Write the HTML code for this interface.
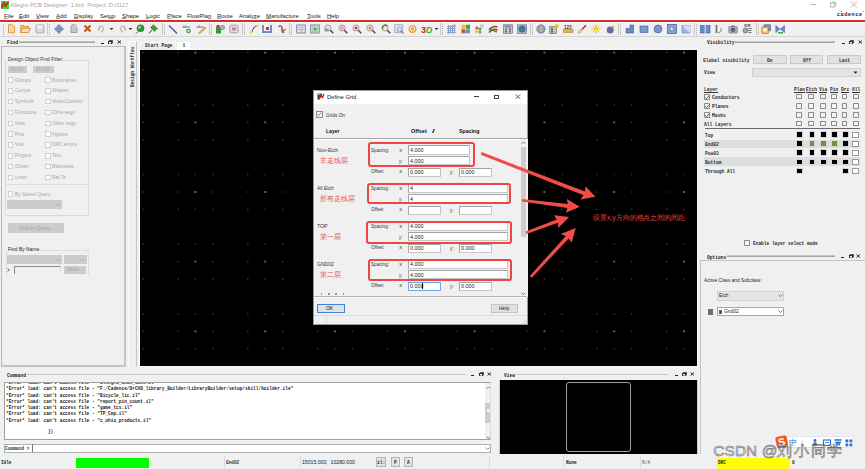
<!DOCTYPE html>
<html><head><meta charset="utf-8">
<style>
*{margin:0;padding:0;box-sizing:border-box}
html,body{width:865px;height:469px;overflow:hidden;background:#f0f0f0;font-family:"Liberation Sans",sans-serif;color:#000;position:relative}
.a{position:absolute}
.t{position:absolute;white-space:nowrap;line-height:1}
.mono{font-family:"Liberation Mono",monospace}
.serif{font-family:"Liberation Serif",serif}
u{text-decoration:underline;text-decoration-color:#9a9a9a;text-decoration-thickness:0.4px;text-underline-offset:0.3px}
</style></head><body>
<div class="a" style="left:0px;top:0px;width:865px;height:20px;background:#fff"></div>
<div class="a" style="left:0px;top:20px;width:865px;height:2px;background:#d42b2b"></div>
<svg class="a" style="left:1px;top:1px;" width="8" height="8" viewBox="0 0 8 8"><rect width="8" height="8" fill="#3fcf3f"/><path d="M0.5 6.5 L3 2 L4.5 5 L7.5 1" stroke="#d02020" stroke-width="1.8" fill="none"/></svg>
<div class="t" style="left:10px;top:2.44px;font-size:6.1px;transform:scaleX(0.965);transform-origin:0 0;color:#a4a4a4">Allegro PCB Designer: 1.brd&nbsp; Project: D:/1117</div>
<div class="t" style="left:3.6px;top:12.64px;font-size:6.1px;transform:scaleX(0.965);transform-origin:0 0;color:#1a1a1a"><u>F</u>ile</div>
<div class="t" style="left:19.4px;top:12.64px;font-size:6.1px;transform:scaleX(0.965);transform-origin:0 0;color:#1a1a1a"><u>E</u>dit</div>
<div class="t" style="left:36px;top:12.64px;font-size:6.1px;transform:scaleX(0.965);transform-origin:0 0;color:#1a1a1a"><u>V</u>iew</div>
<div class="t" style="left:56px;top:12.64px;font-size:6.1px;transform:scaleX(0.965);transform-origin:0 0;color:#1a1a1a"><u>A</u>dd</div>
<div class="t" style="left:74px;top:12.64px;font-size:6.1px;transform:scaleX(0.965);transform-origin:0 0;color:#1a1a1a"><u>D</u>isplay</div>
<div class="t" style="left:100px;top:12.64px;font-size:6.1px;transform:scaleX(0.965);transform-origin:0 0;color:#1a1a1a">Set<u>u</u>p</div>
<div class="t" style="left:122px;top:12.64px;font-size:6.1px;transform:scaleX(0.965);transform-origin:0 0;color:#1a1a1a"><u>S</u>hape</div>
<div class="t" style="left:146px;top:12.64px;font-size:6.1px;transform:scaleX(0.965);transform-origin:0 0;color:#1a1a1a"><u>L</u>ogic</div>
<div class="t" style="left:167px;top:12.64px;font-size:6.1px;transform:scaleX(0.965);transform-origin:0 0;color:#1a1a1a"><u>P</u>lace</div>
<div class="t" style="left:187.3px;top:12.64px;font-size:6.1px;transform:scaleX(0.965);transform-origin:0 0;color:#1a1a1a">FlowPla<u>n</u></div>
<div class="t" style="left:217px;top:12.64px;font-size:6.1px;transform:scaleX(0.965);transform-origin:0 0;color:#1a1a1a"><u>R</u>oute</div>
<div class="t" style="left:239px;top:12.64px;font-size:6.1px;transform:scaleX(0.965);transform-origin:0 0;color:#1a1a1a">Analy<u>z</u>e</div>
<div class="t" style="left:266px;top:12.64px;font-size:6.1px;transform:scaleX(0.965);transform-origin:0 0;color:#1a1a1a"><u>M</u>anufacture</div>
<div class="t" style="left:306.5px;top:12.64px;font-size:6.1px;transform:scaleX(0.965);transform-origin:0 0;color:#1a1a1a"><u>T</u>ools</div>
<div class="t" style="left:327px;top:12.64px;font-size:6.1px;transform:scaleX(0.965);transform-origin:0 0;color:#1a1a1a"><u>H</u>elp</div>
<svg class="a" style="left:809px;top:2px;" width="8" height="5" viewBox="0 0 8 5"><path d="M1 2.5H7" stroke="#9a9a9a" stroke-width="0.7"/></svg>
<svg class="a" style="left:829px;top:1px;" width="8" height="7" viewBox="0 0 8 7"><rect x="1.5" y="2" width="4" height="4" fill="none" stroke="#9a9a9a" stroke-width="0.7"/><path d="M3 1.2H6.8V5" fill="none" stroke="#9a9a9a" stroke-width="0.7"/></svg>
<svg class="a" style="left:850px;top:1px;" width="8" height="7" viewBox="0 0 8 7"><path d="M1 0.5L7 6.5M7 0.5L1 6.5" stroke="#9a9a9a" stroke-width="0.7"/></svg>
<div class="t" style="left:836.8px;top:11.89px;font-size:5.8px;transform:scaleX(0.9);transform-origin:0 0;color:#1a1a1a;font-weight:bold;letter-spacing:0.75px">cadence</div>
<div class="a" style="left:841.1px;top:10.8px;width:1.2px;height:1.2px;background:#e03838"></div>
<svg class="a" style="left:861.8px;top:10.3px;" width="2.4" height="2.4" viewBox="0 0 2.4 2.4"><circle cx="1.2" cy="1.2" r="0.9" fill="none" stroke="#aaa" stroke-width="0.4"/></svg>
<div class="a" style="left:0px;top:22px;width:865px;height:14px;background:#f0f0f0"></div>
<div class="a" style="left:0px;top:22px;width:865px;height:1px;background:#fbfbfb"></div>
<div class="a" style="left:0px;top:35.6px;width:865px;height:1px;background:#d4d4d4"></div>
<div class="a" style="left:1px;top:46px;width:125px;height:321px;background:#f0f0f0;border:1px solid #b8b8b8;border-right:2px solid #c4c4c4;border-bottom:2px solid #c4c4c4"></div>
<div class="a" style="left:128px;top:41px;width:9px;height:326px;background:#f0f0f0;border-left:1px solid #fbfbfb;border-right:1px solid #c4c4c4;border-top:1px solid #fbfbfb"></div>
<div class="a" style="left:139px;top:49px;width:559px;height:318px;background:#fafafa"></div>
<div class="a" style="left:140px;top:50px;width:557px;height:316px;background:#000"></div>
<div class="a" style="left:700.3px;top:260.4px;width:166px;height:194px;background:#f0f0f0;border-left:1px solid #c4c4c4;border-top:1px solid #c4c4c4"></div>
<div class="a" style="left:2.5px;top:23.5px;width:1px;height:11px;background:repeating-linear-gradient(#a8a8a8 0 1px,transparent 1px 2px)"></div>
<svg class="a" style="left:7px;top:24px;" width="11" height="10" viewBox="0 0 11 10"><path d="M1.5 0.8H5.5L7.5 2.8V8.8H1.5Z" fill="#f6dc98" stroke="#d9953e" stroke-width="0.9"/></svg>
<svg class="a" style="left:19.5px;top:24px;" width="11" height="10" viewBox="0 0 11 10"><path d="M0.8 8.5V1.5H4L5 2.5H8.5V4" fill="#f3c46a" stroke="#d98a30" stroke-width="0.9"/><path d="M0.8 8.5L2.5 4.2H10.3L8.6 8.5Z" fill="#fbe3a8" stroke="#d98a30" stroke-width="0.9"/></svg>
<svg class="a" style="left:34.5px;top:24px;" width="11" height="10" viewBox="0 0 11 10"><rect x="1" y="1" width="8" height="8" rx="1" fill="#d8d8d8" stroke="#a8a8a8" stroke-width="0.9"/><rect x="2.5" y="1.5" width="5" height="3" fill="#f4f4f4"/></svg>
<div class="a" style="left:47px;top:23px;width:1px;height:12px;background:#c8c8c8"></div>
<div class="a" style="left:49px;top:23.5px;width:1px;height:11px;background:repeating-linear-gradient(#b0b0b0 0 1px,transparent 1px 2px)"></div>
<svg class="a" style="left:53.5px;top:24px;" width="11" height="10" viewBox="0 0 11 10"><path d="M5 0.5L7 2.5H5.8V4.2H7.5V3L9.5 5L7.5 7V5.8H5.8V7.5H7L5 9.5L3 7.5H4.2V5.8H2.5V7L0.5 5L2.5 3V4.2H4.2V2.5H3Z" fill="#7ba0c8" stroke="#3f6a9a" stroke-width="0.6"/></svg>
<svg class="a" style="left:68.5px;top:24px;" width="11" height="10" viewBox="0 0 11 10"><path d="M2 3.5A3 3 0 0 1 8 3.5V8.5H2Z" fill="#c8c8c8" stroke="#909090" stroke-width="0.8"/><path d="M4 2.5A2.5 2.5 0 0 1 8.5 4" fill="none" stroke="#f0f0f0" stroke-width="0.8"/></svg>
<svg class="a" style="left:82.5px;top:24px;" width="11" height="10" viewBox="0 0 11 10"><path d="M1.5 1.5L7.5 7.5M7.5 1.5L1.5 7.5" stroke="#c0501c" stroke-width="2"/></svg>
<svg class="a" style="left:97px;top:24px;" width="11" height="10" viewBox="0 0 11 10"><path d="M2 5.5Q2 1 5 2.5Q8 4 4.5 8.5" fill="none" stroke="#b4b4b4" stroke-width="1.3"/><path d="M0.5 4.5L2 7L3.5 4.5Z" fill="#b4b4b4"/></svg>
<svg class="a" style="left:108.5px;top:24px;" width="5" height="10" viewBox="0 0 5 10"><path d="M0.5 4L4.5 4L2.5 6Z" fill="#303030"/></svg>
<svg class="a" style="left:116.5px;top:24px;" width="11" height="10" viewBox="0 0 11 10"><path d="M8 5.5Q8 1 5 2.5Q2 4 5.5 8.5" fill="none" stroke="#b4b4b4" stroke-width="1.3"/><path d="M9.5 4.5L8 7L6.5 4.5Z" fill="#b4b4b4"/></svg>
<svg class="a" style="left:127.5px;top:24px;" width="5" height="10" viewBox="0 0 5 10"><path d="M0.5 4L4.5 4L2.5 6Z" fill="#303030"/></svg>
<svg class="a" style="left:134.5px;top:24px;" width="11" height="10" viewBox="0 0 11 10"><circle cx="5.5" cy="4.3" r="3.8" fill="#2e8f2e"/><circle cx="4.5" cy="3.2" r="1.6" fill="#7fd07f"/><path d="M3 7.5L1 9.5" stroke="#404040" stroke-width="0.9"/></svg>
<svg class="a" style="left:147.5px;top:24px;" width="11" height="10" viewBox="0 0 11 10"><path d="M5.5 0.8L9.5 4.8L8 5.5L6.5 7.5L2.5 3.5L4.5 2Z" fill="#3d9a3d" stroke="#2a6a2a" stroke-width="0.6"/><path d="M4 6L0.8 9.3" stroke="#303030" stroke-width="1"/></svg>
<div class="a" style="left:161.5px;top:23px;width:1px;height:12px;background:#c8c8c8"></div>
<div class="a" style="left:163.5px;top:23.5px;width:1px;height:11px;background:repeating-linear-gradient(#b0b0b0 0 1px,transparent 1px 2px)"></div>
<svg class="a" style="left:167.5px;top:24px;" width="11" height="10" viewBox="0 0 11 10"><path d="M1 1.5L9 9.5" stroke="#3e4f8c" stroke-width="1.3"/></svg>
<svg class="a" style="left:181.5px;top:24px;" width="11" height="10" viewBox="0 0 11 10"><text x="0.5" y="4" font-size="4.2" font-family="Liberation Sans" fill="#707070" font-weight="bold">abc</text><circle cx="6.5" cy="7" r="2.3" fill="#2ea02e"/><path d="M5.2 7H7.8M6.5 5.7V8.3" stroke="#fff" stroke-width="0.8"/></svg>
<svg class="a" style="left:195.5px;top:24px;" width="11" height="10" viewBox="0 0 11 10"><text x="0.5" y="4" font-size="4.2" font-family="Liberation Sans" fill="#707070" font-weight="bold">abc</text><path d="M2.5 9L9 3L10 4L3.5 9.8Z" fill="#f0b030" stroke="#b07010" stroke-width="0.5"/></svg>
<div class="a" style="left:209px;top:23px;width:1px;height:12px;background:#c8c8c8"></div>
<div class="a" style="left:211px;top:23.5px;width:1px;height:11px;background:repeating-linear-gradient(#b0b0b0 0 1px,transparent 1px 2px)"></div>
<svg class="a" style="left:214.5px;top:24px;" width="11" height="10" viewBox="0 0 11 10"><path d="M1 3H5L6 5V9.5H1Z" fill="#2f9a2f"/><rect x="5.5" y="1.5" width="4" height="4" rx="1" fill="#b0b0b0" stroke="#707070" stroke-width="0.5"/><rect x="1.5" y="1" width="3" height="2" fill="#c03030"/></svg>
<svg class="a" style="left:229px;top:24px;" width="11" height="10" viewBox="0 0 11 10"><rect x="0.8" y="1.2" width="8.4" height="7.6" rx="1.5" fill="#e8d8e0" stroke="#9a9aaa" stroke-width="0.9"/><rect x="3" y="3.5" width="4" height="3" fill="#d07a9a"/></svg>
<div class="a" style="left:241.5px;top:23px;width:1px;height:12px;background:#c8c8c8"></div>
<div class="a" style="left:243.5px;top:23.5px;width:1px;height:11px;background:repeating-linear-gradient(#b0b0b0 0 1px,transparent 1px 2px)"></div>
<svg class="a" style="left:248.5px;top:24px;" width="11" height="10" viewBox="0 0 11 10"><path d="M1.5 8.5C4 8.5 3.5 2 8.5 1.8" fill="none" stroke="#303030" stroke-width="1"/><circle cx="1.8" cy="8.3" r="1.3" fill="#f0e020"/><circle cx="8.5" cy="1.8" r="1.3" fill="#f0e020"/></svg>
<svg class="a" style="left:262px;top:24px;" width="11" height="10" viewBox="0 0 11 10"><path d="M1 1V8H9V1" fill="none" stroke="#6f8fc8" stroke-width="2"/><rect x="4" y="3" width="3" height="3" fill="#d03030"/></svg>
<svg class="a" style="left:276.5px;top:24px;" width="11" height="10" viewBox="0 0 11 10"><path d="M1.5 3L3 1.5L5 3V7L7 9" fill="none" stroke="#707070" stroke-width="1.3"/><path d="M4.8 3.5L5.5 8L8.5 5" fill="none" stroke="#d04040" stroke-width="1.2"/></svg>
<div class="a" style="left:288.5px;top:23px;width:1px;height:12px;background:#c8c8c8"></div>
<div class="a" style="left:290.5px;top:23.5px;width:1px;height:11px;background:repeating-linear-gradient(#b0b0b0 0 1px,transparent 1px 2px)"></div>
<svg class="a" style="left:296px;top:24px;" width="11" height="10" viewBox="0 0 11 10"><rect x="0.7" y="1" width="8.6" height="8" fill="#e4e8f0" stroke="#6a7fa8" stroke-width="0.9"/><path d="M2 3.5H8M2 5.5H8M4 7H7" stroke="#d86a8a" stroke-width="0.6"/></svg>
<svg class="a" style="left:310px;top:24px;" width="11" height="10" viewBox="0 0 11 10"><rect x="0.7" y="1" width="8.6" height="8" fill="#e0ece0" stroke="#6a7fa8" stroke-width="0.9"/><path d="M2 2.5L8 8M2 8L8 2.5M5 2V8.5M1.5 5H8.5" stroke="#3a9a4a" stroke-width="0.7"/></svg>
<svg class="a" style="left:323.5px;top:24px;" width="11" height="10" viewBox="0 0 11 10"><circle cx="4" cy="4" r="3.1" fill="#e8e0e0" stroke="#b8907a" stroke-width="0.9"/><rect x="0.5" y="4.5" width="4" height="3" fill="#7aa0d0"/><path d="M6.3 6.3L9.3 9.3" stroke="#3a4a8a" stroke-width="1.6"/></svg>
<svg class="a" style="left:338px;top:24px;" width="11" height="10" viewBox="0 0 11 10"><circle cx="4" cy="4" r="3.1" fill="#e8e0e0" stroke="#b8907a" stroke-width="0.9"/><circle cx="4" cy="4" r="2" fill="#d8a8b8"/><path d="M6.3 6.3L9.3 9.3" stroke="#3a4a8a" stroke-width="1.6"/></svg>
<svg class="a" style="left:352px;top:24px;" width="11" height="10" viewBox="0 0 11 10"><circle cx="4" cy="4" r="3.1" fill="#e8e0e0" stroke="#b8907a" stroke-width="0.9"/><rect x="2.8" y="2.8" width="2.4" height="2.4" fill="#d03040"/><path d="M6.3 6.3L9.3 9.3" stroke="#3a4a8a" stroke-width="1.6"/></svg>
<svg class="a" style="left:366px;top:24px;" width="11" height="10" viewBox="0 0 11 10"><circle cx="4" cy="4" r="3.1" fill="#e8e0e0" stroke="#b8907a" stroke-width="0.9"/><rect x="2.8" y="2.8" width="2.4" height="2.4" fill="#d87080"/><path d="M6.3 6.3L9.3 9.3" stroke="#3a4a8a" stroke-width="1.6"/></svg>
<svg class="a" style="left:380.5px;top:24px;" width="11" height="10" viewBox="0 0 11 10"><circle cx="4" cy="4" r="3.1" fill="#e8e0e0" stroke="#b8907a" stroke-width="0.9"/><path d="M2 5A2.5 2.5 0 0 1 6.5 2.5" fill="none" stroke="#2a9a3a" stroke-width="1.4"/><path d="M6.3 6.3L9.3 9.3" stroke="#3a4a8a" stroke-width="1.6"/></svg>
<svg class="a" style="left:393.5px;top:24px;" width="11" height="10" viewBox="0 0 11 10"><rect x="0.7" y="0.7" width="8" height="8" fill="#dde4ee" stroke="#6a7fa8" stroke-width="0.8" stroke-dasharray="1 0.6"/><circle cx="5.5" cy="5.5" r="2.3" fill="#cfe0f0" stroke="#7090b8" stroke-width="0.7"/><path d="M7 7L9.5 9.5" stroke="#b07a3a" stroke-width="1.2"/></svg>
<svg class="a" style="left:408px;top:24px;" width="11" height="10" viewBox="0 0 11 10"><circle cx="4.5" cy="5" r="4" fill="#f0a030"/><circle cx="4.5" cy="5" r="2.2" fill="none" stroke="#fff" stroke-width="0.9"/></svg>
<svg class="a" style="left:420.5px;top:24px;" width="12" height="10" viewBox="0 0 12 10"><text x="0" y="9" font-size="9" font-weight="bold" font-family="Liberation Sans" fill="#d02020">3</text><text x="5" y="9" font-size="9" font-weight="bold" font-family="Liberation Sans" fill="#40b040">D</text></svg>
<svg class="a" style="left:433.5px;top:24px;" width="5" height="10" viewBox="0 0 5 10"><path d="M0.5 4L4.5 4L2.5 6Z" fill="#303030"/></svg>
<div class="a" style="left:439.5px;top:23px;width:1px;height:12px;background:#c8c8c8"></div>
<div class="a" style="left:441.5px;top:23.5px;width:1px;height:11px;background:repeating-linear-gradient(#b0b0b0 0 1px,transparent 1px 2px)"></div>
<svg class="a" style="left:446px;top:24px;" width="11" height="10" viewBox="0 0 11 10"><path d="M1 2.5H9.5M1 4.5H9.5M1 6.5H9.5M1 8.5H9.5M2.5 1V9.5M4.5 1V9.5M6.5 1V9.5M8.5 1V9.5" stroke="#7a8fc0" stroke-width="0.8"/><circle cx="8.5" cy="1.5" r="1.3" fill="#f0a050"/></svg>
<svg class="a" style="left:460.5px;top:24px;" width="11" height="10" viewBox="0 0 11 10"><rect x="0.5" y="0.8" width="4" height="4" fill="#e8c020"/><rect x="5" y="0.8" width="4" height="4" fill="#40a040"/><rect x="0.5" y="5.3" width="4" height="4" fill="#d05030"/><rect x="5" y="5.3" width="4" height="4" fill="#6a8ad0"/></svg>
<svg class="a" style="left:474px;top:24px;" width="11" height="10" viewBox="0 0 11 10"><circle cx="3" cy="4" r="1.5" fill="#e04040"/><circle cx="6" cy="5" r="1.5" fill="#40b040"/><circle cx="2.5" cy="7.5" r="1.5" fill="#e0c020"/><circle cx="6" cy="8" r="1.5" fill="#6a8ad0"/><rect x="6" y="0.5" width="4" height="3" fill="#c8c8c8"/></svg>
<svg class="a" style="left:488px;top:24px;" width="11" height="10" viewBox="0 0 11 10"><path d="M1 6Q5 1 9.5 3M1 8.5Q5 4 9.5 6" fill="none" stroke="#d03030" stroke-width="1.5"/><path d="M1.5 4Q5 7 9 8" fill="none" stroke="#30a030" stroke-width="1.4"/></svg>
<svg class="a" style="left:502.5px;top:24px;" width="11" height="10" viewBox="0 0 11 10"><rect x="0.5" y="0.8" width="9" height="8.5" fill="#c8c8d8" stroke="#707080" stroke-width="0.7"/><rect x="1.5" y="1.5" width="7" height="2" fill="#6a8ad0"/><rect x="2" y="4.5" width="2" height="2" fill="#30b030"/><rect x="6" y="4.5" width="2" height="2" fill="#d03030"/><rect x="2" y="7" width="2" height="1.5" fill="#d03030"/><rect x="6" y="7" width="2" height="1.5" fill="#30b030"/></svg>
<svg class="a" style="left:516.5px;top:24px;" width="11" height="10" viewBox="0 0 11 10"><rect x="0.5" y="0.8" width="9" height="8.5" fill="#b8c0d0" stroke="#707080" stroke-width="0.7"/><circle cx="5" cy="5" r="3.5" fill="#3a6ab0"/><path d="M3 3.5Q5 4 4 6Q6 7 7 5" fill="none" stroke="#3aa03a" stroke-width="1.2"/></svg>
<div class="a" style="left:529.5px;top:23px;width:1px;height:12px;background:#c8c8c8"></div>
<div class="a" style="left:531.5px;top:23.5px;width:1px;height:11px;background:repeating-linear-gradient(#b0b0b0 0 1px,transparent 1px 2px)"></div>
<svg class="a" style="left:535.5px;top:24px;" width="11" height="10" viewBox="0 0 11 10"><circle cx="5" cy="5" r="4.2" fill="#8aa0d0" stroke="#5a70a8" stroke-width="0.7"/><path d="M5 3.5V7.5" stroke="#f0d020" stroke-width="1.3"/><circle cx="5" cy="2.2" r="0.7" fill="#f0d020"/></svg>
<svg class="a" style="left:549px;top:24px;" width="11" height="10" viewBox="0 0 11 10"><rect x="0.8" y="2.5" width="6.5" height="7" fill="#c0c0c0" stroke="#606060" stroke-width="0.6"/><rect x="2" y="4" width="2" height="2" fill="#30a030"/><rect x="2" y="6.5" width="2" height="2" fill="#d03030"/><circle cx="7.8" cy="2.2" r="2" fill="#f0c020"/></svg>
<svg class="a" style="left:563px;top:24px;" width="11" height="10" viewBox="0 0 11 10"><text x="1" y="4.5" font-size="4.5" font-weight="bold" font-family="Liberation Sans" fill="#404040">123</text><rect x="0.5" y="5.5" width="9.5" height="3" fill="#e8b040" stroke="#a07020" stroke-width="0.5"/></svg>
<svg class="a" style="left:577px;top:24px;" width="11" height="10" viewBox="0 0 11 10"><path d="M8.5 0.8L9.5 1.8L5.5 6L4.5 5Z" fill="#b02030"/><path d="M1 9Q1.5 5.5 4.5 5L5.5 6Q5 9 1 9Z" fill="#f0d890" stroke="#b09040" stroke-width="0.5"/></svg>
<svg class="a" style="left:591px;top:24px;" width="11" height="10" viewBox="0 0 11 10"><path d="M5 0.5V2.5M5 7.5V9.5M0.5 5H2.5M7.5 5H9.5M1.8 1.8L3.2 3.2M6.8 6.8L8.2 8.2M8.2 1.8L6.8 3.2M1.8 8.2L3.2 6.8" stroke="#e8a020" stroke-width="0.8"/><circle cx="5" cy="5" r="2.4" fill="#f8d020"/></svg>
<svg class="a" style="left:605.5px;top:24px;" width="11" height="10" viewBox="0 0 11 10"><circle cx="4.2" cy="6" r="3.5" fill="#5a70a0"/><path d="M7 1.5V4.5M5.5 3H8.5M5.8 1.8L8.2 4.2M8.2 1.8L5.8 4.2" stroke="#e8b020" stroke-width="0.7"/></svg>
<div class="a" style="left:618px;top:23px;width:1px;height:12px;background:#c8c8c8"></div>
<div class="a" style="left:620px;top:23.5px;width:1px;height:11px;background:repeating-linear-gradient(#b0b0b0 0 1px,transparent 1px 2px)"></div>
<svg class="a" style="left:624.5px;top:24px;" width="11" height="10" viewBox="0 0 11 10"><path d="M1 9H8.5V1H5V4.5H1Z" fill="#6a8ac8" stroke="#3a5aa0" stroke-width="0.6"/></svg>
<svg class="a" style="left:638.5px;top:24px;" width="11" height="10" viewBox="0 0 11 10"><rect x="1" y="2" width="8" height="6.5" fill="#7a96cc" stroke="#3a5aa0" stroke-width="0.6"/></svg>
<svg class="a" style="left:652.5px;top:24px;" width="11" height="10" viewBox="0 0 11 10"><circle cx="5" cy="5" r="4" fill="#7a96cc" stroke="#3a5aa0" stroke-width="0.6"/></svg>
<svg class="a" style="left:666.5px;top:24px;" width="11" height="10" viewBox="0 0 11 10"><rect x="0.5" y="0.5" width="9" height="9" fill="#8aa4d8" stroke="#3a5aa0" stroke-width="0.7"/><path d="M3.5 2.5L3.5 7.5L5 6L6.5 8L7 7.5L5.8 5.5L7.5 5.2Z" fill="#fff" stroke="#304070" stroke-width="0.4"/></svg>
<svg class="a" style="left:680.5px;top:24px;" width="11" height="10" viewBox="0 0 11 10"><path d="M1 1.5H9V9H1Z" fill="#a0b4dc" stroke="#6a80b0" stroke-width="0.6"/><path d="M1 1.5L9 9V1.5Z" fill="#d8e0f0"/></svg>
<div class="a" style="left:693.5px;top:23px;width:1px;height:12px;background:#c8c8c8"></div>
<div class="a" style="left:695.5px;top:23.5px;width:1px;height:11px;background:repeating-linear-gradient(#b0b0b0 0 1px,transparent 1px 2px)"></div>
<svg class="a" style="left:699.5px;top:24px;" width="11" height="10" viewBox="0 0 11 10"><rect x="0.5" y="1.5" width="9.5" height="7.5" fill="#6a8ac8" stroke="#3a5a9a" stroke-width="0.6"/><path d="M5.2 0.8V9.8" stroke="#dde" stroke-width="1.2"/></svg>
<svg class="a" style="left:714px;top:24px;" width="11" height="10" viewBox="0 0 11 10"><path d="M2.5 0.8V9" stroke="#707888" stroke-width="1.8"/><path d="M4 9Q8 8 7 4" fill="none" stroke="#8890a0" stroke-width="1.2"/></svg>
<svg class="a" style="left:728px;top:24px;" width="11" height="10" viewBox="0 0 11 10"><rect x="0.8" y="2.5" width="8.5" height="6.5" rx="1" fill="#b8b8b8" stroke="#606060" stroke-width="0.6"/><circle cx="5" cy="5.8" r="2" fill="#5a70a8" stroke="#303030" stroke-width="0.5"/><rect x="3.5" y="1.3" width="3" height="1.5" fill="#808080"/></svg>
<svg class="a" style="left:742px;top:24px;" width="11" height="10" viewBox="0 0 11 10"><text x="2" y="2.8" font-size="3" font-family="Liberation Sans" fill="#303030" font-weight="bold">XOR</text><circle cx="3.5" cy="6.5" r="2.5" fill="#a0a8b8" stroke="#404040" stroke-width="0.5"/><path d="M6.5 4.5H9.5M6.5 6.5H9.5M6.5 8.5H9.5" stroke="#303030" stroke-width="0.7"/></svg>
<div class="a" style="left:755.5px;top:23px;width:1px;height:12px;background:#c8c8c8"></div>
<div class="a" style="left:757.5px;top:23.5px;width:1px;height:11px;background:repeating-linear-gradient(#b0b0b0 0 1px,transparent 1px 2px)"></div>
<svg class="a" style="left:760.5px;top:24px;" width="11" height="10" viewBox="0 0 11 10"><rect x="3" y="0.8" width="6.5" height="6" fill="#7a9ad0" stroke="#3a5a9a" stroke-width="0.6"/><rect x="0.8" y="3" width="6.5" height="6.5" fill="#f0c050" stroke="#a07020" stroke-width="0.6"/><rect x="2.5" y="4.5" width="3" height="3" fill="#fff"/></svg>
<svg class="a" style="left:775px;top:24px;" width="11" height="10" viewBox="0 0 11 10"><path d="M0.8 1.5L5 5L0.8 8.5ZM9.5 1.5L5.3 5L9.5 8.5Z" fill="#6a8ad0" stroke="#3a5a9a" stroke-width="0.5"/><rect x="3" y="8" width="5" height="1.5" fill="#30b040"/></svg>
<div class="t" style="left:7px;top:39.61px;font-size:5.6px;transform:scaleX(0.8185);transform-origin:0 0;font-family:'Liberation Mono',monospace;color:#1a1a1a;font-weight:bold">Find</div>
<div class="a" style="left:19px;top:41.4px;width:76.2px;height:1.6px;background:#a4a4a4;border-top:0.5px solid #c4c4c4"></div>
<div class="a" style="left:100.9px;top:43.1px;width:3.2px;height:1px;background:#202020"></div>
<svg class="a" style="left:108.4px;top:39.9px;" width="5" height="4.5" viewBox="0 0 5 4.5"><rect x="0.5" y="1.5" width="3" height="2.6" fill="none" stroke="#202020" stroke-width="0.9"/><path d="M1.5 1.3V0.5H4.5V3H4" fill="none" stroke="#202020" stroke-width="0.8"/></svg>
<svg class="a" style="left:116.9px;top:40.1px;" width="4.5" height="4" viewBox="0 0 4.5 4"><path d="M0.5 0.5L4 3.5M4 0.5L0.5 3.5" stroke="#202020" stroke-width="0.9"/></svg>
<div class="a" style="left:4.6px;top:59.5px;width:84px;height:156.5px;border:1px solid #dadada;border-radius:1px"></div>
<div class="a" style="left:7px;top:58px;width:55px;height:4px;background:#f0f0f0"></div>
<div class="t" style="left:7.9px;top:57.36px;font-size:5.6px;transform:scaleX(0.88);transform-origin:0 0;color:#333">Design Object Find Filter</div>
<div class="a" style="left:7.7px;top:66.3px;width:19.2px;height:7.1px;background:#cccccc;color:#a4a4a4"></div>
<div class="t" style="left:10px;top:66.66px;font-size:5.6px;transform:scaleX(0.87);transform-origin:0 0;color:#a4a4a4">All On</div>
<div class="a" style="left:33px;top:66.3px;width:20.8px;height:7.1px;background:#cccccc;color:#a4a4a4"></div>
<div class="t" style="left:35.8px;top:66.66px;font-size:5.6px;transform:scaleX(0.87);transform-origin:0 0;color:#a4a4a4">All Off</div>
<div class="a" style="left:7.5px;top:77.3px;width:5.5px;height:5.5px;background:#fff;border:0.8px solid #cfcfcf"></div>
<div class="a" style="left:45.3px;top:77.3px;width:5.5px;height:5.5px;background:#fff;border:0.8px solid #cfcfcf"></div>
<div class="t" style="left:14.8px;top:77.56px;font-size:5.6px;transform:scaleX(0.87);transform-origin:0 0;color:#a8a8a8">Groups</div>
<div class="t" style="left:52.2px;top:77.56px;font-size:5.6px;transform:scaleX(0.87);transform-origin:0 0;color:#a8a8a8">Bond wires</div>
<div class="a" style="left:7.5px;top:88.12px;width:5.5px;height:5.5px;background:#fff;border:0.8px solid #cfcfcf"></div>
<div class="a" style="left:45.3px;top:88.12px;width:5.5px;height:5.5px;background:#fff;border:0.8px solid #cfcfcf"></div>
<div class="t" style="left:14.8px;top:88.38px;font-size:5.6px;transform:scaleX(0.87);transform-origin:0 0;color:#a8a8a8">Comps</div>
<div class="t" style="left:52.2px;top:88.38px;font-size:5.6px;transform:scaleX(0.87);transform-origin:0 0;color:#a8a8a8">Shapes</div>
<div class="a" style="left:7.5px;top:98.94px;width:5.5px;height:5.5px;background:#fff;border:0.8px solid #cfcfcf"></div>
<div class="a" style="left:45.3px;top:98.94px;width:5.5px;height:5.5px;background:#fff;border:0.8px solid #cfcfcf"></div>
<div class="t" style="left:14.8px;top:99.20px;font-size:5.6px;transform:scaleX(0.87);transform-origin:0 0;color:#a8a8a8">Symbols</div>
<div class="t" style="left:52.2px;top:99.20px;font-size:5.6px;transform:scaleX(0.87);transform-origin:0 0;color:#a8a8a8">Voids/Cavities</div>
<div class="a" style="left:7.5px;top:109.75999999999999px;width:5.5px;height:5.5px;background:#fff;border:0.8px solid #cfcfcf"></div>
<div class="a" style="left:45.3px;top:109.75999999999999px;width:5.5px;height:5.5px;background:#fff;border:0.8px solid #cfcfcf"></div>
<div class="t" style="left:14.8px;top:110.02px;font-size:5.6px;transform:scaleX(0.87);transform-origin:0 0;color:#a8a8a8">Functions</div>
<div class="t" style="left:52.2px;top:110.02px;font-size:5.6px;transform:scaleX(0.87);transform-origin:0 0;color:#a8a8a8">Cline segs</div>
<div class="a" style="left:7.5px;top:120.58px;width:5.5px;height:5.5px;background:#fff;border:0.8px solid #cfcfcf"></div>
<div class="a" style="left:45.3px;top:120.58px;width:5.5px;height:5.5px;background:#fff;border:0.8px solid #cfcfcf"></div>
<div class="t" style="left:14.8px;top:120.84px;font-size:5.6px;transform:scaleX(0.87);transform-origin:0 0;color:#a8a8a8">Nets</div>
<div class="t" style="left:52.2px;top:120.84px;font-size:5.6px;transform:scaleX(0.87);transform-origin:0 0;color:#a8a8a8">Other segs</div>
<div class="a" style="left:7.5px;top:131.4px;width:5.5px;height:5.5px;background:#fff;border:0.8px solid #cfcfcf"></div>
<div class="a" style="left:45.3px;top:131.4px;width:5.5px;height:5.5px;background:#fff;border:0.8px solid #cfcfcf"></div>
<div class="t" style="left:14.8px;top:131.66px;font-size:5.6px;transform:scaleX(0.87);transform-origin:0 0;color:#a8a8a8">Pins</div>
<div class="t" style="left:52.2px;top:131.66px;font-size:5.6px;transform:scaleX(0.87);transform-origin:0 0;color:#a8a8a8">Figures</div>
<div class="a" style="left:7.5px;top:142.22px;width:5.5px;height:5.5px;background:#fff;border:0.8px solid #cfcfcf"></div>
<div class="a" style="left:45.3px;top:142.22px;width:5.5px;height:5.5px;background:#fff;border:0.8px solid #cfcfcf"></div>
<div class="t" style="left:14.8px;top:142.48px;font-size:5.6px;transform:scaleX(0.87);transform-origin:0 0;color:#a8a8a8">Vias</div>
<div class="t" style="left:52.2px;top:142.48px;font-size:5.6px;transform:scaleX(0.87);transform-origin:0 0;color:#a8a8a8">DRC errors</div>
<div class="a" style="left:7.5px;top:153.04000000000002px;width:5.5px;height:5.5px;background:#fff;border:0.8px solid #cfcfcf"></div>
<div class="a" style="left:45.3px;top:153.04000000000002px;width:5.5px;height:5.5px;background:#fff;border:0.8px solid #cfcfcf"></div>
<div class="t" style="left:14.8px;top:153.30px;font-size:5.6px;transform:scaleX(0.87);transform-origin:0 0;color:#a8a8a8">Fingers</div>
<div class="t" style="left:52.2px;top:153.30px;font-size:5.6px;transform:scaleX(0.87);transform-origin:0 0;color:#a8a8a8">Text</div>
<div class="a" style="left:7.5px;top:163.86px;width:5.5px;height:5.5px;background:#fff;border:0.8px solid #cfcfcf"></div>
<div class="a" style="left:45.3px;top:163.86px;width:5.5px;height:5.5px;background:#fff;border:0.8px solid #cfcfcf"></div>
<div class="t" style="left:14.8px;top:164.12px;font-size:5.6px;transform:scaleX(0.87);transform-origin:0 0;color:#a8a8a8">Clines</div>
<div class="t" style="left:52.2px;top:164.12px;font-size:5.6px;transform:scaleX(0.87);transform-origin:0 0;color:#a8a8a8">Ratsnests</div>
<div class="a" style="left:7.5px;top:174.68px;width:5.5px;height:5.5px;background:#fff;border:0.8px solid #cfcfcf"></div>
<div class="a" style="left:45.3px;top:174.68px;width:5.5px;height:5.5px;background:#fff;border:0.8px solid #cfcfcf"></div>
<div class="t" style="left:14.8px;top:174.94px;font-size:5.6px;transform:scaleX(0.87);transform-origin:0 0;color:#a8a8a8">Lines</div>
<div class="t" style="left:52.2px;top:174.94px;font-size:5.6px;transform:scaleX(0.87);transform-origin:0 0;color:#a8a8a8">Rat Ts</div>
<div class="a" style="left:5.5px;top:184.2px;width:83px;height:1px;background:#dcdcdc"></div>
<div class="a" style="left:7.5px;top:191.3px;width:5.5px;height:5.5px;background:#fff;border:0.8px solid #cfcfcf"></div>
<div class="t" style="left:14.8px;top:191.56px;font-size:5.6px;transform:scaleX(0.87);transform-origin:0 0;color:#a8a8a8">By Saved Query</div>
<div class="a" style="left:7px;top:200.4px;width:55px;height:8.9px;background:#cccccc"></div>
<svg class="a" style="left:55px;top:203px;" width="5" height="4" viewBox="0 0 5 4"><path d="M0.5 1L2.5 3L4.5 1" fill="none" stroke="#a0a0a0" stroke-width="0.7"/></svg>
<div class="a" style="left:8px;top:223.4px;width:55.6px;height:9.6px;background:#cccccc;color:#a4a4a4"></div>
<div class="t" style="left:18.5px;top:226.26px;font-size:5.6px;transform:scaleX(0.87);transform-origin:0 0;color:#a4a4a4">Find by Query...</div>
<div class="a" style="left:5.5px;top:249.5px;width:83px;height:26px;border:1px solid #e0e0e0;border-bottom:none"></div>
<div class="a" style="left:7px;top:247px;width:32px;height:4px;background:#f0f0f0"></div>
<div class="t" style="left:8px;top:246.76px;font-size:5.6px;transform:scaleX(0.88);transform-origin:0 0;color:#222">Find By Name</div>
<div class="a" style="left:7px;top:254.7px;width:55px;height:9px;background:#cccccc"></div>
<svg class="a" style="left:55.5px;top:257.5px;" width="5" height="4" viewBox="0 0 5 4"><path d="M0.5 1L2.5 3L4.5 1" fill="none" stroke="#a0a0a0" stroke-width="0.7"/></svg>
<div class="a" style="left:64px;top:254.7px;width:23px;height:9px;background:#cccccc"></div>
<svg class="a" style="left:80px;top:257.5px;" width="5" height="4" viewBox="0 0 5 4"><path d="M0.5 1L2.5 3L4.5 1" fill="none" stroke="#a0a0a0" stroke-width="0.7"/></svg>
<svg class="a" style="left:6.5px;top:267.5px;" width="3" height="4" viewBox="0 0 3 4"><path d="M0.5 0.5L2.3 2L0.5 3.5" fill="none" stroke="#404040" stroke-width="0.7"/></svg>
<div class="a" style="left:14.2px;top:266px;width:47px;height:8px;background:#f0f0f0;border-top:1px solid #8a8a8a;border-left:1px solid #8a8a8a;border-right:1px solid #e0e0e0"></div>
<div class="a" style="left:64px;top:266.3px;width:22px;height:7.5px;background:#cccccc;color:#a4a4a4"></div>
<div class="t" style="left:67px;top:267.06px;font-size:5.6px;transform:scaleX(0.87);transform-origin:0 0;color:#a4a4a4">More...</div>
<div class="t mono" style="left:132.5px;top:66.6px;font-size:4.8px;font-weight:bold;color:#333;transform:translate(-50%,-50%) rotate(-90deg) scaleX(0.93)">Design Workflow</div>
<div class="a" style="left:140.3px;top:42.4px;width:36.2px;height:8px;background:#ececec;border:1px solid #fafafa;border-bottom:none"></div>
<div class="t mono" style="left:144.8px;top:44.2px;font-size:4.8px;font-weight:bold;color:#2a2a2a;transform:scaleX(0.95);transform-origin:0 0">Start Page</div>
<div class="a" style="left:176.7px;top:41.6px;width:13.6px;height:8.5px;background:#fff"></div>
<div class="t mono" style="left:182.6px;top:44.2px;font-size:4.8px;font-weight:bold;color:#444">1</div>
<svg class="a" style="left:140px;top:50px;" width="557" height="316" viewBox="0 0 557 316"><rect x="2.4" y="1.9" width="1.4" height="1.4" fill="#3a3a3a"/><rect x="37.3" y="1.9" width="1.4" height="1.4" fill="#3a3a3a"/><rect x="54.4" y="1.6" width="2" height="2" fill="#5c5c5c"/><rect x="72.2" y="1.9" width="1.4" height="1.4" fill="#3a3a3a"/><rect x="107.1" y="1.9" width="1.4" height="1.4" fill="#3a3a3a"/><rect x="124.2" y="1.6" width="2" height="2" fill="#5c5c5c"/><rect x="142.0" y="1.9" width="1.4" height="1.4" fill="#3a3a3a"/><rect x="176.9" y="1.9" width="1.4" height="1.4" fill="#3a3a3a"/><rect x="194.0" y="1.6" width="2" height="2" fill="#5c5c5c"/><rect x="211.8" y="1.9" width="1.4" height="1.4" fill="#3a3a3a"/><rect x="246.7" y="1.9" width="1.4" height="1.4" fill="#3a3a3a"/><rect x="263.9" y="1.6" width="2" height="2" fill="#5c5c5c"/><rect x="281.6" y="1.9" width="1.4" height="1.4" fill="#3a3a3a"/><rect x="316.5" y="1.9" width="1.4" height="1.4" fill="#3a3a3a"/><rect x="333.6" y="1.6" width="2" height="2" fill="#5c5c5c"/><rect x="351.4" y="1.9" width="1.4" height="1.4" fill="#3a3a3a"/><rect x="386.3" y="1.9" width="1.4" height="1.4" fill="#3a3a3a"/><rect x="403.4" y="1.6" width="2" height="2" fill="#5c5c5c"/><rect x="421.2" y="1.9" width="1.4" height="1.4" fill="#3a3a3a"/><rect x="456.1" y="1.9" width="1.4" height="1.4" fill="#3a3a3a"/><rect x="473.2" y="1.6" width="2" height="2" fill="#5c5c5c"/><rect x="491.0" y="1.9" width="1.4" height="1.4" fill="#3a3a3a"/><rect x="525.9" y="1.9" width="1.4" height="1.4" fill="#3a3a3a"/><rect x="543.0" y="1.6" width="2" height="2" fill="#5c5c5c"/><rect x="2.4" y="19.3" width="1.4" height="1.4" fill="#3a3a3a"/><rect x="37.3" y="19.3" width="1.4" height="1.4" fill="#3a3a3a"/><rect x="54.7" y="19.3" width="1.4" height="1.4" fill="#3a3a3a"/><rect x="72.2" y="19.3" width="1.4" height="1.4" fill="#3a3a3a"/><rect x="107.1" y="19.3" width="1.4" height="1.4" fill="#3a3a3a"/><rect x="124.5" y="19.3" width="1.4" height="1.4" fill="#3a3a3a"/><rect x="142.0" y="19.3" width="1.4" height="1.4" fill="#3a3a3a"/><rect x="176.9" y="19.3" width="1.4" height="1.4" fill="#3a3a3a"/><rect x="194.3" y="19.3" width="1.4" height="1.4" fill="#3a3a3a"/><rect x="211.8" y="19.3" width="1.4" height="1.4" fill="#3a3a3a"/><rect x="246.7" y="19.3" width="1.4" height="1.4" fill="#3a3a3a"/><rect x="264.2" y="19.3" width="1.4" height="1.4" fill="#3a3a3a"/><rect x="281.6" y="19.3" width="1.4" height="1.4" fill="#3a3a3a"/><rect x="316.5" y="19.3" width="1.4" height="1.4" fill="#3a3a3a"/><rect x="333.9" y="19.3" width="1.4" height="1.4" fill="#3a3a3a"/><rect x="351.4" y="19.3" width="1.4" height="1.4" fill="#3a3a3a"/><rect x="386.3" y="19.3" width="1.4" height="1.4" fill="#3a3a3a"/><rect x="403.7" y="19.3" width="1.4" height="1.4" fill="#3a3a3a"/><rect x="421.2" y="19.3" width="1.4" height="1.4" fill="#3a3a3a"/><rect x="456.1" y="19.3" width="1.4" height="1.4" fill="#3a3a3a"/><rect x="473.6" y="19.3" width="1.4" height="1.4" fill="#3a3a3a"/><rect x="491.0" y="19.3" width="1.4" height="1.4" fill="#3a3a3a"/><rect x="525.9" y="19.3" width="1.4" height="1.4" fill="#3a3a3a"/><rect x="543.3" y="19.3" width="1.4" height="1.4" fill="#3a3a3a"/><rect x="2.4" y="54.2" width="1.4" height="1.4" fill="#3a3a3a"/><rect x="37.3" y="54.2" width="1.4" height="1.4" fill="#3a3a3a"/><rect x="54.7" y="54.2" width="1.4" height="1.4" fill="#3a3a3a"/><rect x="72.2" y="54.2" width="1.4" height="1.4" fill="#3a3a3a"/><rect x="107.1" y="54.2" width="1.4" height="1.4" fill="#3a3a3a"/><rect x="124.5" y="54.2" width="1.4" height="1.4" fill="#3a3a3a"/><rect x="142.0" y="54.2" width="1.4" height="1.4" fill="#3a3a3a"/><rect x="176.9" y="54.2" width="1.4" height="1.4" fill="#3a3a3a"/><rect x="194.3" y="54.2" width="1.4" height="1.4" fill="#3a3a3a"/><rect x="211.8" y="54.2" width="1.4" height="1.4" fill="#3a3a3a"/><rect x="246.7" y="54.2" width="1.4" height="1.4" fill="#3a3a3a"/><rect x="264.2" y="54.2" width="1.4" height="1.4" fill="#3a3a3a"/><rect x="281.6" y="54.2" width="1.4" height="1.4" fill="#3a3a3a"/><rect x="316.5" y="54.2" width="1.4" height="1.4" fill="#3a3a3a"/><rect x="333.9" y="54.2" width="1.4" height="1.4" fill="#3a3a3a"/><rect x="351.4" y="54.2" width="1.4" height="1.4" fill="#3a3a3a"/><rect x="386.3" y="54.2" width="1.4" height="1.4" fill="#3a3a3a"/><rect x="403.7" y="54.2" width="1.4" height="1.4" fill="#3a3a3a"/><rect x="421.2" y="54.2" width="1.4" height="1.4" fill="#3a3a3a"/><rect x="456.1" y="54.2" width="1.4" height="1.4" fill="#3a3a3a"/><rect x="473.6" y="54.2" width="1.4" height="1.4" fill="#3a3a3a"/><rect x="491.0" y="54.2" width="1.4" height="1.4" fill="#3a3a3a"/><rect x="525.9" y="54.2" width="1.4" height="1.4" fill="#3a3a3a"/><rect x="543.3" y="54.2" width="1.4" height="1.4" fill="#3a3a3a"/><rect x="2.4" y="71.6" width="1.4" height="1.4" fill="#3a3a3a"/><rect x="37.3" y="71.6" width="1.4" height="1.4" fill="#3a3a3a"/><rect x="54.4" y="71.3" width="2" height="2" fill="#5c5c5c"/><rect x="72.2" y="71.6" width="1.4" height="1.4" fill="#3a3a3a"/><rect x="107.1" y="71.6" width="1.4" height="1.4" fill="#3a3a3a"/><rect x="124.2" y="71.3" width="2" height="2" fill="#5c5c5c"/><rect x="142.0" y="71.6" width="1.4" height="1.4" fill="#3a3a3a"/><rect x="176.9" y="71.6" width="1.4" height="1.4" fill="#3a3a3a"/><rect x="194.0" y="71.3" width="2" height="2" fill="#5c5c5c"/><rect x="211.8" y="71.6" width="1.4" height="1.4" fill="#3a3a3a"/><rect x="246.7" y="71.6" width="1.4" height="1.4" fill="#3a3a3a"/><rect x="263.9" y="71.3" width="2" height="2" fill="#5c5c5c"/><rect x="281.6" y="71.6" width="1.4" height="1.4" fill="#3a3a3a"/><rect x="316.5" y="71.6" width="1.4" height="1.4" fill="#3a3a3a"/><rect x="333.6" y="71.3" width="2" height="2" fill="#5c5c5c"/><rect x="351.4" y="71.6" width="1.4" height="1.4" fill="#3a3a3a"/><rect x="386.3" y="71.6" width="1.4" height="1.4" fill="#3a3a3a"/><rect x="403.4" y="71.3" width="2" height="2" fill="#5c5c5c"/><rect x="421.2" y="71.6" width="1.4" height="1.4" fill="#3a3a3a"/><rect x="456.1" y="71.6" width="1.4" height="1.4" fill="#3a3a3a"/><rect x="473.2" y="71.3" width="2" height="2" fill="#5c5c5c"/><rect x="491.0" y="71.6" width="1.4" height="1.4" fill="#3a3a3a"/><rect x="525.9" y="71.6" width="1.4" height="1.4" fill="#3a3a3a"/><rect x="543.0" y="71.3" width="2" height="2" fill="#5c5c5c"/><rect x="2.4" y="89.0" width="1.4" height="1.4" fill="#3a3a3a"/><rect x="37.3" y="89.0" width="1.4" height="1.4" fill="#3a3a3a"/><rect x="54.7" y="89.0" width="1.4" height="1.4" fill="#3a3a3a"/><rect x="72.2" y="89.0" width="1.4" height="1.4" fill="#3a3a3a"/><rect x="107.1" y="89.0" width="1.4" height="1.4" fill="#3a3a3a"/><rect x="124.5" y="89.0" width="1.4" height="1.4" fill="#3a3a3a"/><rect x="142.0" y="89.0" width="1.4" height="1.4" fill="#3a3a3a"/><rect x="176.9" y="89.0" width="1.4" height="1.4" fill="#3a3a3a"/><rect x="194.3" y="89.0" width="1.4" height="1.4" fill="#3a3a3a"/><rect x="211.8" y="89.0" width="1.4" height="1.4" fill="#3a3a3a"/><rect x="246.7" y="89.0" width="1.4" height="1.4" fill="#3a3a3a"/><rect x="264.2" y="89.0" width="1.4" height="1.4" fill="#3a3a3a"/><rect x="281.6" y="89.0" width="1.4" height="1.4" fill="#3a3a3a"/><rect x="316.5" y="89.0" width="1.4" height="1.4" fill="#3a3a3a"/><rect x="333.9" y="89.0" width="1.4" height="1.4" fill="#3a3a3a"/><rect x="351.4" y="89.0" width="1.4" height="1.4" fill="#3a3a3a"/><rect x="386.3" y="89.0" width="1.4" height="1.4" fill="#3a3a3a"/><rect x="403.7" y="89.0" width="1.4" height="1.4" fill="#3a3a3a"/><rect x="421.2" y="89.0" width="1.4" height="1.4" fill="#3a3a3a"/><rect x="456.1" y="89.0" width="1.4" height="1.4" fill="#3a3a3a"/><rect x="473.6" y="89.0" width="1.4" height="1.4" fill="#3a3a3a"/><rect x="491.0" y="89.0" width="1.4" height="1.4" fill="#3a3a3a"/><rect x="525.9" y="89.0" width="1.4" height="1.4" fill="#3a3a3a"/><rect x="543.3" y="89.0" width="1.4" height="1.4" fill="#3a3a3a"/><rect x="2.4" y="123.8" width="1.4" height="1.4" fill="#3a3a3a"/><rect x="37.3" y="123.8" width="1.4" height="1.4" fill="#3a3a3a"/><rect x="54.7" y="123.8" width="1.4" height="1.4" fill="#3a3a3a"/><rect x="72.2" y="123.8" width="1.4" height="1.4" fill="#3a3a3a"/><rect x="107.1" y="123.8" width="1.4" height="1.4" fill="#3a3a3a"/><rect x="124.5" y="123.8" width="1.4" height="1.4" fill="#3a3a3a"/><rect x="142.0" y="123.8" width="1.4" height="1.4" fill="#3a3a3a"/><rect x="176.9" y="123.8" width="1.4" height="1.4" fill="#3a3a3a"/><rect x="194.3" y="123.8" width="1.4" height="1.4" fill="#3a3a3a"/><rect x="211.8" y="123.8" width="1.4" height="1.4" fill="#3a3a3a"/><rect x="246.7" y="123.8" width="1.4" height="1.4" fill="#3a3a3a"/><rect x="264.2" y="123.8" width="1.4" height="1.4" fill="#3a3a3a"/><rect x="281.6" y="123.8" width="1.4" height="1.4" fill="#3a3a3a"/><rect x="316.5" y="123.8" width="1.4" height="1.4" fill="#3a3a3a"/><rect x="333.9" y="123.8" width="1.4" height="1.4" fill="#3a3a3a"/><rect x="351.4" y="123.8" width="1.4" height="1.4" fill="#3a3a3a"/><rect x="386.3" y="123.8" width="1.4" height="1.4" fill="#3a3a3a"/><rect x="403.7" y="123.8" width="1.4" height="1.4" fill="#3a3a3a"/><rect x="421.2" y="123.8" width="1.4" height="1.4" fill="#3a3a3a"/><rect x="456.1" y="123.8" width="1.4" height="1.4" fill="#3a3a3a"/><rect x="473.6" y="123.8" width="1.4" height="1.4" fill="#3a3a3a"/><rect x="491.0" y="123.8" width="1.4" height="1.4" fill="#3a3a3a"/><rect x="525.9" y="123.8" width="1.4" height="1.4" fill="#3a3a3a"/><rect x="543.3" y="123.8" width="1.4" height="1.4" fill="#3a3a3a"/><rect x="2.4" y="141.3" width="1.4" height="1.4" fill="#3a3a3a"/><rect x="37.3" y="141.3" width="1.4" height="1.4" fill="#3a3a3a"/><rect x="54.4" y="141.0" width="2" height="2" fill="#5c5c5c"/><rect x="72.2" y="141.3" width="1.4" height="1.4" fill="#3a3a3a"/><rect x="107.1" y="141.3" width="1.4" height="1.4" fill="#3a3a3a"/><rect x="124.2" y="141.0" width="2" height="2" fill="#5c5c5c"/><rect x="142.0" y="141.3" width="1.4" height="1.4" fill="#3a3a3a"/><rect x="176.9" y="141.3" width="1.4" height="1.4" fill="#3a3a3a"/><rect x="194.0" y="141.0" width="2" height="2" fill="#5c5c5c"/><rect x="211.8" y="141.3" width="1.4" height="1.4" fill="#3a3a3a"/><rect x="246.7" y="141.3" width="1.4" height="1.4" fill="#3a3a3a"/><rect x="263.9" y="141.0" width="2" height="2" fill="#5c5c5c"/><rect x="281.6" y="141.3" width="1.4" height="1.4" fill="#3a3a3a"/><rect x="316.5" y="141.3" width="1.4" height="1.4" fill="#3a3a3a"/><rect x="333.6" y="141.0" width="2" height="2" fill="#5c5c5c"/><rect x="351.4" y="141.3" width="1.4" height="1.4" fill="#3a3a3a"/><rect x="386.3" y="141.3" width="1.4" height="1.4" fill="#3a3a3a"/><rect x="403.4" y="141.0" width="2" height="2" fill="#5c5c5c"/><rect x="421.2" y="141.3" width="1.4" height="1.4" fill="#3a3a3a"/><rect x="456.1" y="141.3" width="1.4" height="1.4" fill="#3a3a3a"/><rect x="473.2" y="141.0" width="2" height="2" fill="#5c5c5c"/><rect x="491.0" y="141.3" width="1.4" height="1.4" fill="#3a3a3a"/><rect x="525.9" y="141.3" width="1.4" height="1.4" fill="#3a3a3a"/><rect x="543.0" y="141.0" width="2" height="2" fill="#5c5c5c"/><rect x="2.4" y="158.7" width="1.4" height="1.4" fill="#3a3a3a"/><rect x="37.3" y="158.7" width="1.4" height="1.4" fill="#3a3a3a"/><rect x="54.7" y="158.7" width="1.4" height="1.4" fill="#3a3a3a"/><rect x="72.2" y="158.7" width="1.4" height="1.4" fill="#3a3a3a"/><rect x="107.1" y="158.7" width="1.4" height="1.4" fill="#3a3a3a"/><rect x="124.5" y="158.7" width="1.4" height="1.4" fill="#3a3a3a"/><rect x="142.0" y="158.7" width="1.4" height="1.4" fill="#3a3a3a"/><rect x="176.9" y="158.7" width="1.4" height="1.4" fill="#3a3a3a"/><rect x="194.3" y="158.7" width="1.4" height="1.4" fill="#3a3a3a"/><rect x="211.8" y="158.7" width="1.4" height="1.4" fill="#3a3a3a"/><rect x="246.7" y="158.7" width="1.4" height="1.4" fill="#3a3a3a"/><rect x="264.2" y="158.7" width="1.4" height="1.4" fill="#3a3a3a"/><rect x="281.6" y="158.7" width="1.4" height="1.4" fill="#3a3a3a"/><rect x="316.5" y="158.7" width="1.4" height="1.4" fill="#3a3a3a"/><rect x="333.9" y="158.7" width="1.4" height="1.4" fill="#3a3a3a"/><rect x="351.4" y="158.7" width="1.4" height="1.4" fill="#3a3a3a"/><rect x="386.3" y="158.7" width="1.4" height="1.4" fill="#3a3a3a"/><rect x="403.7" y="158.7" width="1.4" height="1.4" fill="#3a3a3a"/><rect x="421.2" y="158.7" width="1.4" height="1.4" fill="#3a3a3a"/><rect x="456.1" y="158.7" width="1.4" height="1.4" fill="#3a3a3a"/><rect x="473.6" y="158.7" width="1.4" height="1.4" fill="#3a3a3a"/><rect x="491.0" y="158.7" width="1.4" height="1.4" fill="#3a3a3a"/><rect x="525.9" y="158.7" width="1.4" height="1.4" fill="#3a3a3a"/><rect x="543.3" y="158.7" width="1.4" height="1.4" fill="#3a3a3a"/><rect x="2.4" y="193.5" width="1.4" height="1.4" fill="#3a3a3a"/><rect x="37.3" y="193.5" width="1.4" height="1.4" fill="#3a3a3a"/><rect x="54.7" y="193.5" width="1.4" height="1.4" fill="#3a3a3a"/><rect x="72.2" y="193.5" width="1.4" height="1.4" fill="#3a3a3a"/><rect x="107.1" y="193.5" width="1.4" height="1.4" fill="#3a3a3a"/><rect x="124.5" y="193.5" width="1.4" height="1.4" fill="#3a3a3a"/><rect x="142.0" y="193.5" width="1.4" height="1.4" fill="#3a3a3a"/><rect x="176.9" y="193.5" width="1.4" height="1.4" fill="#3a3a3a"/><rect x="194.3" y="193.5" width="1.4" height="1.4" fill="#3a3a3a"/><rect x="211.8" y="193.5" width="1.4" height="1.4" fill="#3a3a3a"/><rect x="246.7" y="193.5" width="1.4" height="1.4" fill="#3a3a3a"/><rect x="264.2" y="193.5" width="1.4" height="1.4" fill="#3a3a3a"/><rect x="281.6" y="193.5" width="1.4" height="1.4" fill="#3a3a3a"/><rect x="316.5" y="193.5" width="1.4" height="1.4" fill="#3a3a3a"/><rect x="333.9" y="193.5" width="1.4" height="1.4" fill="#3a3a3a"/><rect x="351.4" y="193.5" width="1.4" height="1.4" fill="#3a3a3a"/><rect x="386.3" y="193.5" width="1.4" height="1.4" fill="#3a3a3a"/><rect x="403.7" y="193.5" width="1.4" height="1.4" fill="#3a3a3a"/><rect x="421.2" y="193.5" width="1.4" height="1.4" fill="#3a3a3a"/><rect x="456.1" y="193.5" width="1.4" height="1.4" fill="#3a3a3a"/><rect x="473.6" y="193.5" width="1.4" height="1.4" fill="#3a3a3a"/><rect x="491.0" y="193.5" width="1.4" height="1.4" fill="#3a3a3a"/><rect x="525.9" y="193.5" width="1.4" height="1.4" fill="#3a3a3a"/><rect x="543.3" y="193.5" width="1.4" height="1.4" fill="#3a3a3a"/><rect x="2.4" y="210.9" width="1.4" height="1.4" fill="#3a3a3a"/><rect x="37.3" y="210.9" width="1.4" height="1.4" fill="#3a3a3a"/><rect x="54.4" y="210.6" width="2" height="2" fill="#5c5c5c"/><rect x="72.2" y="210.9" width="1.4" height="1.4" fill="#3a3a3a"/><rect x="107.1" y="210.9" width="1.4" height="1.4" fill="#3a3a3a"/><rect x="124.2" y="210.6" width="2" height="2" fill="#5c5c5c"/><rect x="142.0" y="210.9" width="1.4" height="1.4" fill="#3a3a3a"/><rect x="176.9" y="210.9" width="1.4" height="1.4" fill="#3a3a3a"/><rect x="194.0" y="210.6" width="2" height="2" fill="#5c5c5c"/><rect x="211.8" y="210.9" width="1.4" height="1.4" fill="#3a3a3a"/><rect x="246.7" y="210.9" width="1.4" height="1.4" fill="#3a3a3a"/><rect x="263.9" y="210.6" width="2" height="2" fill="#5c5c5c"/><rect x="281.6" y="210.9" width="1.4" height="1.4" fill="#3a3a3a"/><rect x="316.5" y="210.9" width="1.4" height="1.4" fill="#3a3a3a"/><rect x="333.6" y="210.6" width="2" height="2" fill="#5c5c5c"/><rect x="351.4" y="210.9" width="1.4" height="1.4" fill="#3a3a3a"/><rect x="386.3" y="210.9" width="1.4" height="1.4" fill="#3a3a3a"/><rect x="403.4" y="210.6" width="2" height="2" fill="#5c5c5c"/><rect x="421.2" y="210.9" width="1.4" height="1.4" fill="#3a3a3a"/><rect x="456.1" y="210.9" width="1.4" height="1.4" fill="#3a3a3a"/><rect x="473.2" y="210.6" width="2" height="2" fill="#5c5c5c"/><rect x="491.0" y="210.9" width="1.4" height="1.4" fill="#3a3a3a"/><rect x="525.9" y="210.9" width="1.4" height="1.4" fill="#3a3a3a"/><rect x="543.0" y="210.6" width="2" height="2" fill="#5c5c5c"/><rect x="2.4" y="228.4" width="1.4" height="1.4" fill="#3a3a3a"/><rect x="37.3" y="228.4" width="1.4" height="1.4" fill="#3a3a3a"/><rect x="54.7" y="228.4" width="1.4" height="1.4" fill="#3a3a3a"/><rect x="72.2" y="228.4" width="1.4" height="1.4" fill="#3a3a3a"/><rect x="107.1" y="228.4" width="1.4" height="1.4" fill="#3a3a3a"/><rect x="124.5" y="228.4" width="1.4" height="1.4" fill="#3a3a3a"/><rect x="142.0" y="228.4" width="1.4" height="1.4" fill="#3a3a3a"/><rect x="176.9" y="228.4" width="1.4" height="1.4" fill="#3a3a3a"/><rect x="194.3" y="228.4" width="1.4" height="1.4" fill="#3a3a3a"/><rect x="211.8" y="228.4" width="1.4" height="1.4" fill="#3a3a3a"/><rect x="246.7" y="228.4" width="1.4" height="1.4" fill="#3a3a3a"/><rect x="264.2" y="228.4" width="1.4" height="1.4" fill="#3a3a3a"/><rect x="281.6" y="228.4" width="1.4" height="1.4" fill="#3a3a3a"/><rect x="316.5" y="228.4" width="1.4" height="1.4" fill="#3a3a3a"/><rect x="333.9" y="228.4" width="1.4" height="1.4" fill="#3a3a3a"/><rect x="351.4" y="228.4" width="1.4" height="1.4" fill="#3a3a3a"/><rect x="386.3" y="228.4" width="1.4" height="1.4" fill="#3a3a3a"/><rect x="403.7" y="228.4" width="1.4" height="1.4" fill="#3a3a3a"/><rect x="421.2" y="228.4" width="1.4" height="1.4" fill="#3a3a3a"/><rect x="456.1" y="228.4" width="1.4" height="1.4" fill="#3a3a3a"/><rect x="473.6" y="228.4" width="1.4" height="1.4" fill="#3a3a3a"/><rect x="491.0" y="228.4" width="1.4" height="1.4" fill="#3a3a3a"/><rect x="525.9" y="228.4" width="1.4" height="1.4" fill="#3a3a3a"/><rect x="543.3" y="228.4" width="1.4" height="1.4" fill="#3a3a3a"/><rect x="2.4" y="263.2" width="1.4" height="1.4" fill="#3a3a3a"/><rect x="37.3" y="263.2" width="1.4" height="1.4" fill="#3a3a3a"/><rect x="54.7" y="263.2" width="1.4" height="1.4" fill="#3a3a3a"/><rect x="72.2" y="263.2" width="1.4" height="1.4" fill="#3a3a3a"/><rect x="107.1" y="263.2" width="1.4" height="1.4" fill="#3a3a3a"/><rect x="124.5" y="263.2" width="1.4" height="1.4" fill="#3a3a3a"/><rect x="142.0" y="263.2" width="1.4" height="1.4" fill="#3a3a3a"/><rect x="176.9" y="263.2" width="1.4" height="1.4" fill="#3a3a3a"/><rect x="194.3" y="263.2" width="1.4" height="1.4" fill="#3a3a3a"/><rect x="211.8" y="263.2" width="1.4" height="1.4" fill="#3a3a3a"/><rect x="246.7" y="263.2" width="1.4" height="1.4" fill="#3a3a3a"/><rect x="264.2" y="263.2" width="1.4" height="1.4" fill="#3a3a3a"/><rect x="281.6" y="263.2" width="1.4" height="1.4" fill="#3a3a3a"/><rect x="316.5" y="263.2" width="1.4" height="1.4" fill="#3a3a3a"/><rect x="333.9" y="263.2" width="1.4" height="1.4" fill="#3a3a3a"/><rect x="351.4" y="263.2" width="1.4" height="1.4" fill="#3a3a3a"/><rect x="386.3" y="263.2" width="1.4" height="1.4" fill="#3a3a3a"/><rect x="403.7" y="263.2" width="1.4" height="1.4" fill="#3a3a3a"/><rect x="421.2" y="263.2" width="1.4" height="1.4" fill="#3a3a3a"/><rect x="456.1" y="263.2" width="1.4" height="1.4" fill="#3a3a3a"/><rect x="473.6" y="263.2" width="1.4" height="1.4" fill="#3a3a3a"/><rect x="491.0" y="263.2" width="1.4" height="1.4" fill="#3a3a3a"/><rect x="525.9" y="263.2" width="1.4" height="1.4" fill="#3a3a3a"/><rect x="543.3" y="263.2" width="1.4" height="1.4" fill="#3a3a3a"/><rect x="2.4" y="280.6" width="1.4" height="1.4" fill="#3a3a3a"/><rect x="37.3" y="280.6" width="1.4" height="1.4" fill="#3a3a3a"/><rect x="54.4" y="280.3" width="2" height="2" fill="#5c5c5c"/><rect x="72.2" y="280.6" width="1.4" height="1.4" fill="#3a3a3a"/><rect x="107.1" y="280.6" width="1.4" height="1.4" fill="#3a3a3a"/><rect x="124.2" y="280.3" width="2" height="2" fill="#5c5c5c"/><rect x="142.0" y="280.6" width="1.4" height="1.4" fill="#3a3a3a"/><rect x="176.9" y="280.6" width="1.4" height="1.4" fill="#3a3a3a"/><rect x="194.0" y="280.3" width="2" height="2" fill="#5c5c5c"/><rect x="211.8" y="280.6" width="1.4" height="1.4" fill="#3a3a3a"/><rect x="246.7" y="280.6" width="1.4" height="1.4" fill="#3a3a3a"/><rect x="263.9" y="280.3" width="2" height="2" fill="#5c5c5c"/><rect x="281.6" y="280.6" width="1.4" height="1.4" fill="#3a3a3a"/><rect x="316.5" y="280.6" width="1.4" height="1.4" fill="#3a3a3a"/><rect x="333.6" y="280.3" width="2" height="2" fill="#5c5c5c"/><rect x="351.4" y="280.6" width="1.4" height="1.4" fill="#3a3a3a"/><rect x="386.3" y="280.6" width="1.4" height="1.4" fill="#3a3a3a"/><rect x="403.4" y="280.3" width="2" height="2" fill="#5c5c5c"/><rect x="421.2" y="280.6" width="1.4" height="1.4" fill="#3a3a3a"/><rect x="456.1" y="280.6" width="1.4" height="1.4" fill="#3a3a3a"/><rect x="473.2" y="280.3" width="2" height="2" fill="#5c5c5c"/><rect x="491.0" y="280.6" width="1.4" height="1.4" fill="#3a3a3a"/><rect x="525.9" y="280.6" width="1.4" height="1.4" fill="#3a3a3a"/><rect x="543.0" y="280.3" width="2" height="2" fill="#5c5c5c"/><rect x="2.4" y="298.0" width="1.4" height="1.4" fill="#3a3a3a"/><rect x="37.3" y="298.0" width="1.4" height="1.4" fill="#3a3a3a"/><rect x="54.7" y="298.0" width="1.4" height="1.4" fill="#3a3a3a"/><rect x="72.2" y="298.0" width="1.4" height="1.4" fill="#3a3a3a"/><rect x="107.1" y="298.0" width="1.4" height="1.4" fill="#3a3a3a"/><rect x="124.5" y="298.0" width="1.4" height="1.4" fill="#3a3a3a"/><rect x="142.0" y="298.0" width="1.4" height="1.4" fill="#3a3a3a"/><rect x="176.9" y="298.0" width="1.4" height="1.4" fill="#3a3a3a"/><rect x="194.3" y="298.0" width="1.4" height="1.4" fill="#3a3a3a"/><rect x="211.8" y="298.0" width="1.4" height="1.4" fill="#3a3a3a"/><rect x="246.7" y="298.0" width="1.4" height="1.4" fill="#3a3a3a"/><rect x="264.2" y="298.0" width="1.4" height="1.4" fill="#3a3a3a"/><rect x="281.6" y="298.0" width="1.4" height="1.4" fill="#3a3a3a"/><rect x="316.5" y="298.0" width="1.4" height="1.4" fill="#3a3a3a"/><rect x="333.9" y="298.0" width="1.4" height="1.4" fill="#3a3a3a"/><rect x="351.4" y="298.0" width="1.4" height="1.4" fill="#3a3a3a"/><rect x="386.3" y="298.0" width="1.4" height="1.4" fill="#3a3a3a"/><rect x="403.7" y="298.0" width="1.4" height="1.4" fill="#3a3a3a"/><rect x="421.2" y="298.0" width="1.4" height="1.4" fill="#3a3a3a"/><rect x="456.1" y="298.0" width="1.4" height="1.4" fill="#3a3a3a"/><rect x="473.6" y="298.0" width="1.4" height="1.4" fill="#3a3a3a"/><rect x="491.0" y="298.0" width="1.4" height="1.4" fill="#3a3a3a"/><rect x="525.9" y="298.0" width="1.4" height="1.4" fill="#3a3a3a"/><rect x="543.3" y="298.0" width="1.4" height="1.4" fill="#3a3a3a"/></svg>
<div class="a" style="left:313px;top:90px;width:215.3px;height:234.6px;background:#f0f0f0;border:1px solid #9a9a9a"></div>
<div class="a" style="left:314px;top:91px;width:213.3px;height:12.8px;background:#fff"></div>
<svg class="a" style="left:317px;top:92.8px;" width="7.5" height="7" viewBox="0 0 7.5 7"><path d="M0.5 0.5H5V2.5L3.5 4L2 6.5H0.5Z" fill="#1e3a9a"/><path d="M1.5 6.5L4 3L5.5 4.5L7 1" fill="none" stroke="#d82020" stroke-width="1.5"/><path d="M1 1.5H3.5" stroke="#fff" stroke-width="0.6"/></svg>
<div class="t" style="left:326.6px;top:93.65px;font-size:6.2px;transform:scaleX(0.9376);transform-origin:0 0;color:#222">Define Grid</div>
<div class="a" style="left:474px;top:96.2px;width:4.9px;height:0.8px;background:#444"></div>
<div class="a" style="left:494.4px;top:94.5px;width:5px;height:4.4px;border:0.9px solid #444"></div>
<svg class="a" style="left:514.8px;top:94px;" width="6" height="5.4" viewBox="0 0 6 5.4"><path d="M0.4 0.3L5.6 5.1M5.6 0.3L0.4 5.1" stroke="#444" stroke-width="0.8"/></svg>
<div class="a" style="left:316.4px;top:111.3px;width:6.3px;height:6.3px;border:0.8px solid #8a8a8a;background:#f4f4f4"></div>
<svg class="a" style="left:316.4px;top:111.3px;" width="6.3" height="6.3" viewBox="0 0 6.3 6.3"><path d="M1.3 3.2L2.6 4.6L5.2 1.6" fill="none" stroke="#707070" stroke-width="0.8"/></svg>
<div class="t" style="left:326px;top:112.57px;font-size:5.7px;transform:scaleX(0.8331);transform-origin:0 0;color:#333">Grids On</div>
<div class="t" style="left:326.4px;top:129.16px;font-size:5.6px;transform:scaleX(0.9101);transform-origin:0 0;color:#111;font-weight:bold">Layer</div>
<div class="t" style="left:411.3px;top:129.16px;font-size:5.6px;transform:scaleX(0.9704);transform-origin:0 0;color:#111;font-weight:bold">Offset</div>
<div class="t" style="left:432.4px;top:129.16px;font-size:5.6px;transform:scaleX(1.7997);transform-origin:0 0;color:#111;font-weight:bold">/</div>
<div class="t" style="left:459.2px;top:129.16px;font-size:5.6px;transform:scaleX(0.9457);transform-origin:0 0;color:#111;font-weight:bold">Spacing</div>
<div class="a" style="left:314px;top:137.8px;width:213.3px;height:1px;background:#a4a4a4"></div>
<div class="a" style="left:314px;top:138.8px;width:213.3px;height:0.6px;background:#fcfcfc"></div>
<div class="a" style="left:519.5px;top:139px;width:8px;height:157.5px;background:#f0f0f0"></div>
<div class="a" style="left:521px;top:147px;width:5px;height:90px;background:#cdcdcd"></div>
<svg class="a" style="left:521px;top:141.3px;" width="5" height="3.5" viewBox="0 0 5 3.5"><path d="M0.6 2.8L2.5 0.9L4.4 2.8" fill="none" stroke="#606060" stroke-width="0.8"/></svg>
<svg class="a" style="left:521px;top:291.6px;" width="5" height="3.5" viewBox="0 0 5 3.5"><path d="M0.6 0.7L2.5 2.6L4.4 0.7" fill="none" stroke="#606060" stroke-width="0.8"/></svg>
<div class="t" style="left:317px;top:147.76px;font-size:5.6px;transform:scaleX(0.8996);transform-origin:0 0;color:#333">Non-Etch</div>
<div class="t" style="left:320.2px;top:157.27px;font-size:7px;color:#ee4a42">非走线层</div>
<div class="t" style="left:370.8px;top:147.76px;font-size:5.6px;transform:scaleX(0.8259);transform-origin:0 0;color:#333">Spacing:</div>
<div class="t" style="left:399.3px;top:147.56px;font-size:5.6px;color:#333">x</div>
<div class="t" style="left:399.2px;top:158.56px;font-size:5.6px;transform:scaleX(0.8);transform-origin:0 0;color:#333">y:</div>
<div class="t" style="left:370.8px;top:169.36px;font-size:5.6px;transform:scaleX(0.8113);transform-origin:0 0;color:#333">Offset:</div>
<div class="t" style="left:399.3px;top:169.26px;font-size:5.6px;color:#333">x</div>
<div class="t" style="left:449.5px;top:169.56px;font-size:5.6px;transform:scaleX(0.8);transform-origin:0 0;color:#333">y:</div>
<div class="a" style="left:408.4px;top:145px;width:61.60000000000002px;height:9.5px;background:#fff;border-top:1.2px solid #a4a4a4;border-left:1px solid #a4a4a4;border-right:1px solid #c4c4c4;border-bottom:1px solid #c8c8c8"></div>
<div class="t" style="left:409.59999999999997px;top:147.56px;font-size:5.6px;transform:scaleX(0.9633);transform-origin:0 0;color:#222">4.000</div>
<div class="a" style="left:408.4px;top:156.2px;width:61.60000000000002px;height:9.3px;background:#fff;border-top:1.2px solid #a4a4a4;border-left:1px solid #a4a4a4;border-right:1px solid #c4c4c4;border-bottom:1px solid #c8c8c8"></div>
<div class="t" style="left:409.59999999999997px;top:158.56px;font-size:5.6px;transform:scaleX(0.9633);transform-origin:0 0;color:#222">4.000</div>
<div class="a" style="left:408.4px;top:167.5px;width:32.9px;height:9px;background:#fff;border-top:1.2px solid #a4a4a4;border-left:1px solid #a4a4a4;border-right:1px solid #c4c4c4;border-bottom:1px solid #c8c8c8"></div>
<div class="t" style="left:409.59999999999997px;top:169.56px;font-size:5.6px;transform:scaleX(0.9633);transform-origin:0 0;color:#222">0.000</div>
<div class="a" style="left:459.3px;top:167.5px;width:32.4px;height:9px;background:#fff;border-top:1.2px solid #a4a4a4;border-left:1px solid #a4a4a4;border-right:1px solid #c4c4c4;border-bottom:1px solid #c8c8c8"></div>
<div class="t" style="left:460.5px;top:169.56px;font-size:5.6px;transform:scaleX(0.9633);transform-origin:0 0;color:#222">0.000</div>
<div class="t" style="left:317px;top:185.76px;font-size:5.6px;transform:scaleX(0.8849);transform-origin:0 0;color:#333">All Etch</div>
<div class="t" style="left:320.2px;top:195.27px;font-size:7px;color:#ee4a42">所有走线层</div>
<div class="t" style="left:370.8px;top:185.76px;font-size:5.6px;transform:scaleX(0.8259);transform-origin:0 0;color:#333">Spacing:</div>
<div class="t" style="left:399.3px;top:185.56px;font-size:5.6px;color:#333">x</div>
<div class="t" style="left:399.2px;top:196.56px;font-size:5.6px;transform:scaleX(0.8);transform-origin:0 0;color:#333">y:</div>
<div class="t" style="left:370.8px;top:207.36px;font-size:5.6px;transform:scaleX(0.8113);transform-origin:0 0;color:#333">Offset:</div>
<div class="t" style="left:399.3px;top:207.26px;font-size:5.6px;color:#333">x</div>
<div class="t" style="left:449.5px;top:207.56px;font-size:5.6px;transform:scaleX(0.8);transform-origin:0 0;color:#333">y:</div>
<div class="a" style="left:408.4px;top:183px;width:100.0px;height:9.5px;background:#fff;border-top:1.2px solid #a4a4a4;border-left:1px solid #a4a4a4;border-right:1px solid #c4c4c4;border-bottom:1px solid #c8c8c8"></div>
<div class="t" style="left:409.59999999999997px;top:185.56px;font-size:5.6px;transform:scaleX(0.9632);transform-origin:0 0;color:#222">4</div>
<div class="a" style="left:408.4px;top:194.2px;width:100.0px;height:9.3px;background:#fff;border-top:1.2px solid #a4a4a4;border-left:1px solid #a4a4a4;border-right:1px solid #c4c4c4;border-bottom:1px solid #c8c8c8"></div>
<div class="t" style="left:409.59999999999997px;top:196.56px;font-size:5.6px;transform:scaleX(0.9632);transform-origin:0 0;color:#222">4</div>
<div class="a" style="left:408.4px;top:205.5px;width:32.9px;height:9px;background:#fff;border-top:1.2px solid #a4a4a4;border-left:1px solid #a4a4a4;border-right:1px solid #c4c4c4;border-bottom:1px solid #c8c8c8"></div>
<div class="a" style="left:459.3px;top:205.5px;width:32.4px;height:9px;background:#fff;border-top:1.2px solid #a4a4a4;border-left:1px solid #a4a4a4;border-right:1px solid #c4c4c4;border-bottom:1px solid #c8c8c8"></div>
<div class="t" style="left:317px;top:223.76px;font-size:5.6px;transform:scaleX(0.9202);transform-origin:0 0;color:#333">TOP</div>
<div class="t" style="left:320.2px;top:233.27px;font-size:7px;color:#ee4a42">第一层</div>
<div class="t" style="left:370.8px;top:223.76px;font-size:5.6px;transform:scaleX(0.8259);transform-origin:0 0;color:#333">Spacing:</div>
<div class="t" style="left:399.3px;top:223.56px;font-size:5.6px;color:#333">x</div>
<div class="t" style="left:399.2px;top:234.56px;font-size:5.6px;transform:scaleX(0.8);transform-origin:0 0;color:#333">y:</div>
<div class="t" style="left:370.8px;top:245.36px;font-size:5.6px;transform:scaleX(0.8113);transform-origin:0 0;color:#333">Offset:</div>
<div class="t" style="left:399.3px;top:245.26px;font-size:5.6px;color:#333">x</div>
<div class="t" style="left:449.5px;top:245.56px;font-size:5.6px;transform:scaleX(0.8);transform-origin:0 0;color:#333">y:</div>
<div class="a" style="left:408.4px;top:221px;width:100.0px;height:9.5px;background:#fff;border-top:1.2px solid #a4a4a4;border-left:1px solid #a4a4a4;border-right:1px solid #c4c4c4;border-bottom:1px solid #c8c8c8"></div>
<div class="t" style="left:409.59999999999997px;top:223.56px;font-size:5.6px;transform:scaleX(0.9633);transform-origin:0 0;color:#222">4.000</div>
<div class="a" style="left:408.4px;top:232.2px;width:100.0px;height:9.3px;background:#fff;border-top:1.2px solid #a4a4a4;border-left:1px solid #a4a4a4;border-right:1px solid #c4c4c4;border-bottom:1px solid #c8c8c8"></div>
<div class="t" style="left:409.59999999999997px;top:234.56px;font-size:5.6px;transform:scaleX(0.9633);transform-origin:0 0;color:#222">4.000</div>
<div class="a" style="left:408.4px;top:243.5px;width:32.9px;height:9px;background:#fff;border-top:1.2px solid #a4a4a4;border-left:1px solid #a4a4a4;border-right:1px solid #c4c4c4;border-bottom:1px solid #c8c8c8"></div>
<div class="t" style="left:409.59999999999997px;top:245.56px;font-size:5.6px;transform:scaleX(0.9633);transform-origin:0 0;color:#222">0.000</div>
<div class="a" style="left:459.3px;top:243.5px;width:32.4px;height:9px;background:#fff;border-top:1.2px solid #a4a4a4;border-left:1px solid #a4a4a4;border-right:1px solid #c4c4c4;border-bottom:1px solid #c8c8c8"></div>
<div class="t" style="left:460.5px;top:245.56px;font-size:5.6px;transform:scaleX(0.9633);transform-origin:0 0;color:#222">0.000</div>
<div class="t" style="left:317px;top:261.76px;font-size:5.6px;transform:scaleX(0.8997);transform-origin:0 0;color:#333">GND02</div>
<div class="t" style="left:320.2px;top:271.27px;font-size:7px;color:#ee4a42">第二层</div>
<div class="t" style="left:370.8px;top:261.76px;font-size:5.6px;transform:scaleX(0.8259);transform-origin:0 0;color:#333">Spacing:</div>
<div class="t" style="left:399.3px;top:261.56px;font-size:5.6px;color:#333">x</div>
<div class="t" style="left:399.2px;top:272.56px;font-size:5.6px;transform:scaleX(0.8);transform-origin:0 0;color:#333">y:</div>
<div class="t" style="left:370.8px;top:283.36px;font-size:5.6px;transform:scaleX(0.8113);transform-origin:0 0;color:#333">Offset:</div>
<div class="t" style="left:399.3px;top:283.26px;font-size:5.6px;color:#333">x</div>
<div class="t" style="left:449.5px;top:283.56px;font-size:5.6px;transform:scaleX(0.8);transform-origin:0 0;color:#333">y:</div>
<div class="a" style="left:408.4px;top:259px;width:100.0px;height:9.5px;background:#fff;border-top:1.2px solid #a4a4a4;border-left:1px solid #a4a4a4;border-right:1px solid #c4c4c4;border-bottom:1px solid #c8c8c8"></div>
<div class="t" style="left:409.59999999999997px;top:261.56px;font-size:5.6px;transform:scaleX(0.9633);transform-origin:0 0;color:#222">4.000</div>
<div class="a" style="left:408.4px;top:270.2px;width:100.0px;height:9.3px;background:#fff;border-top:1.2px solid #a4a4a4;border-left:1px solid #a4a4a4;border-right:1px solid #c4c4c4;border-bottom:1px solid #c8c8c8"></div>
<div class="t" style="left:409.59999999999997px;top:272.56px;font-size:5.6px;transform:scaleX(0.9633);transform-origin:0 0;color:#222">4.000</div>
<div class="a" style="left:408.4px;top:281.5px;width:32.9px;height:9px;background:#fff;border:1px solid #6eaaea"></div>
<div class="t" style="left:409.59999999999997px;top:283.56px;font-size:5.6px;transform:scaleX(0.9633);transform-origin:0 0;color:#222">0.000</div>
<div class="a" style="left:459.3px;top:281.5px;width:32.4px;height:9px;background:#fff;border-top:1.2px solid #a4a4a4;border-left:1px solid #a4a4a4;border-right:1px solid #c4c4c4;border-bottom:1px solid #c8c8c8"></div>
<div class="t" style="left:460.5px;top:283.56px;font-size:5.6px;transform:scaleX(0.9633);transform-origin:0 0;color:#222">0.000</div>
<div class="a" style="left:421.9px;top:282.8px;width:0.6px;height:6px;background:#000"></div>
<div class="a" style="left:320.7px;top:293.3px;width:1.6px;height:1.4px;background:#f07070"></div>
<div class="a" style="left:328.0px;top:293.3px;width:1.6px;height:1.4px;background:#f07070"></div>
<div class="a" style="left:335.2px;top:293.3px;width:1.6px;height:1.4px;background:#f07070"></div>
<div class="a" style="left:342.59999999999997px;top:293.3px;width:1.6px;height:1.4px;background:#f07070"></div>
<div class="a" style="left:368.2px;top:142.4px;width:107.0px;height:24.5px;border:2px solid #ee4642;border-radius:3px"></div>
<div class="a" style="left:367.3px;top:182.5px;width:144.2px;height:21.099999999999994px;border:2px solid #ee4642;border-radius:3px"></div>
<div class="a" style="left:366.2px;top:221px;width:145.5px;height:22.5px;border:2px solid #ee4642;border-radius:3px"></div>
<div class="a" style="left:368.3px;top:258.6px;width:143.39999999999998px;height:22.399999999999977px;border:2px solid #ee4642;border-radius:3px"></div>
<div class="a" style="left:314px;top:296.2px;width:213.3px;height:1.1px;background:#b4b4b4"></div>
<div class="a" style="left:314px;top:297.3px;width:213.3px;height:0.6px;background:#fafafa"></div>
<div class="a" style="left:317.2px;top:303.6px;width:27.6px;height:9.7px;background:#e1e1e1;border:1px solid #3f86d8"></div>
<div class="t" style="left:326.3px;top:306.06px;font-size:5.6px;transform:scaleX(0.8652);transform-origin:0 0;color:#111">OK</div>
<div class="a" style="left:490.5px;top:303.6px;width:27.3px;height:9.7px;background:#e1e1e1;border:1px solid #c4c4c4"></div>
<div class="t" style="left:499.2px;top:306.06px;font-size:5.6px;transform:scaleX(0.8943);transform-origin:0 0;color:#222">Help</div>
<div class="a" style="left:314px;top:314.5px;width:213.3px;height:0.8px;background:#dcdcdc"></div>
<div class="a" style="left:326px;top:315.3px;width:0.8px;height:8.8px;background:#dcdcdc"></div>
<svg class="a" style="left:522px;top:318.5px;" width="5" height="5" viewBox="0 0 5 5"><path d="M4.5 0.5L0.5 4.5M4.5 2.5L2.5 4.5" stroke="#c0c0c0" stroke-width="0.6"/></svg>
<svg class="a" style="left:0;top:0" width="865" height="469" viewBox="0 0 865 469"><path d="M480.7 154.7 L583.6 195.2 L580.3 199.4 L595.4 196.8 L585.5 186.2 L585.0 191.5 L481.7 152.1Z" fill="#f04c48"/><path d="M521.7 201.6 L567.5 207.9 L565.8 212.7 L579.8 206.7 L566.7 199.0 L567.9 204.1 L521.9 199.0Z" fill="#f04c48"/><path d="M526.4 233.9 L558.1 222.8 L558.2 228.0 L569.2 216.9 L553.9 215.2 L556.8 219.4 L525.6 231.5Z" fill="#f04c48"/><path d="M531.8 277.8 L568.7 238.4 L571.8 242.5 L575.7 228.0 L560.7 234.0 L565.9 235.9 L529.8 276.0Z" fill="#f04c48"/></svg>
<div class="t" style="left:593px;top:214.07px;font-size:7px;color:#e8483f;letter-spacing:-0.05px">设置x,y方向的格点之间的间距</div>
<div class="t" style="left:706.7px;top:39.61px;font-size:5.6px;transform:scaleX(0.8185);transform-origin:0 0;font-family:'Liberation Mono',monospace;color:#1a1a1a;font-weight:bold">Visibility</div>
<div class="a" style="left:735px;top:41.4px;width:100px;height:1.6px;background:#a4a4a4;border-top:0.5px solid #c4c4c4"></div>
<div class="a" style="left:841.5px;top:43.1px;width:3.2px;height:1px;background:#202020"></div>
<svg class="a" style="left:849.0px;top:39.9px;" width="5" height="4.5" viewBox="0 0 5 4.5"><rect x="0.5" y="1.5" width="3" height="2.6" fill="none" stroke="#202020" stroke-width="0.9"/><path d="M1.5 1.3V0.5H4.5V3H4" fill="none" stroke="#202020" stroke-width="0.8"/></svg>
<svg class="a" style="left:857.5px;top:40.1px;" width="4.5" height="4" viewBox="0 0 4.5 4"><path d="M0.5 0.5L4 3.5M4 0.5L0.5 3.5" stroke="#202020" stroke-width="0.9"/></svg>
<div class="t" style="left:703.1px;top:57.81px;font-size:5.6px;transform:scaleX(0.8155);transform-origin:0 0;font-family:'Liberation Mono',monospace;color:#2a2a2a;font-weight:bold">Global&nbsp;visibility</div>
<div class="a" style="left:752.9px;top:55.1px;width:33.80000000000007px;height:9.300000000000004px;background:#e1e1e1;border:1px solid #cacaca"></div>
<div class="t" style="left:767.06px;top:57.96px;font-size:5.6px;transform:scaleX(0.8155);transform-origin:0 0;font-family:'Liberation Mono',monospace;color:#2a2a2a;font-weight:bold">On</div>
<div class="a" style="left:790.3px;top:55.1px;width:33.10000000000002px;height:9.300000000000004px;background:#e1e1e1;border:1px solid #cacaca"></div>
<div class="t" style="left:802.7399999999999px;top:57.96px;font-size:5.6px;transform:scaleX(0.8155);transform-origin:0 0;font-family:'Liberation Mono',monospace;color:#2a2a2a;font-weight:bold">Off</div>
<div class="a" style="left:827.2px;top:55.1px;width:33.799999999999955px;height:9.300000000000004px;background:#e1e1e1;border:1px solid #cacaca"></div>
<div class="t" style="left:838.62px;top:57.96px;font-size:5.6px;transform:scaleX(0.8155);transform-origin:0 0;font-family:'Liberation Mono',monospace;color:#2a2a2a;font-weight:bold">Last</div>
<div class="t" style="left:703.5px;top:70.01px;font-size:5.6px;transform:scaleX(0.8155);transform-origin:0 0;font-family:'Liberation Mono',monospace;color:#2a2a2a;font-weight:bold">View</div>
<div class="a" style="left:752.3px;top:67.6px;width:109.2px;height:9.1px;background:#e4e4e4;border:1px solid #d0d0d0"></div>
<svg class="a" style="left:853px;top:70.6px;" width="5" height="3" viewBox="0 0 5 3"><path d="M0.5 0.5H4.5L2.5 2.8Z" fill="#202020"/></svg>
<div class="t" style="left:704.4px;top:87.31px;font-size:5.6px;transform:scaleX(0.8155);transform-origin:0 0;font-family:'Liberation Mono',monospace;color:#2a2a2a;font-weight:bold">Layer</div>
<div class="a" style="left:704.4px;top:91.6px;width:13.7px;height:0.6px;background:#333"></div>
<div class="t" style="left:793.6px;top:87.01px;font-size:5.6px;transform:scaleX(0.8155);transform-origin:0 0;font-family:'Liberation Mono',monospace;color:#2a2a2a;font-weight:bold">Plan</div>
<div class="a" style="left:793.6px;top:91.5px;width:10.96px;height:0.6px;background:#333"></div>
<div class="t" style="left:806.1px;top:87.01px;font-size:5.6px;transform:scaleX(0.8155);transform-origin:0 0;font-family:'Liberation Mono',monospace;color:#2a2a2a;font-weight:bold">Etch</div>
<div class="a" style="left:806.1px;top:91.5px;width:10.96px;height:0.6px;background:#333"></div>
<div class="t" style="left:818.9px;top:87.01px;font-size:5.6px;transform:scaleX(0.8155);transform-origin:0 0;font-family:'Liberation Mono',monospace;color:#2a2a2a;font-weight:bold">Via</div>
<div class="a" style="left:818.9px;top:91.5px;width:8.22px;height:0.6px;background:#333"></div>
<div class="t" style="left:829.9px;top:87.01px;font-size:5.6px;transform:scaleX(0.8155);transform-origin:0 0;font-family:'Liberation Mono',monospace;color:#2a2a2a;font-weight:bold">Pin</div>
<div class="a" style="left:829.9px;top:91.5px;width:8.22px;height:0.6px;background:#333"></div>
<div class="t" style="left:840.8px;top:87.01px;font-size:5.6px;transform:scaleX(0.8155);transform-origin:0 0;font-family:'Liberation Mono',monospace;color:#2a2a2a;font-weight:bold">Drc</div>
<div class="a" style="left:840.8px;top:91.5px;width:8.22px;height:0.6px;background:#333"></div>
<div class="t" style="left:852px;top:87.01px;font-size:5.6px;transform:scaleX(0.8155);transform-origin:0 0;font-family:'Liberation Mono',monospace;color:#2a2a2a;font-weight:bold">All</div>
<div class="a" style="left:852px;top:91.5px;width:8.22px;height:0.6px;background:#333"></div>
<div class="a" style="left:796px;top:93.6px;width:5.9px;height:5.9px;background:#f4f4f4;border:0.9px solid #8c8c8c;border-radius:0.8px"></div>
<div class="a" style="left:808.3px;top:93.6px;width:5.9px;height:5.9px;background:#f4f4f4;border:0.9px solid #8c8c8c;border-radius:0.8px"></div>
<div class="a" style="left:820px;top:93.6px;width:5.9px;height:5.9px;background:#f4f4f4;border:0.9px solid #8c8c8c;border-radius:0.8px"></div>
<div class="a" style="left:831px;top:93.6px;width:5.9px;height:5.9px;background:#f4f4f4;border:0.9px solid #8c8c8c;border-radius:0.8px"></div>
<div class="a" style="left:841.6px;top:93.6px;width:5.9px;height:5.9px;background:#f4f4f4;border:0.9px solid #8c8c8c;border-radius:0.8px"></div>
<div class="a" style="left:852.8px;top:93.6px;width:5.9px;height:5.9px;background:#f4f4f4;border:0.9px solid #8c8c8c;border-radius:0.8px"></div>
<div class="a" style="left:704.2px;top:94.0px;width:6.3px;height:6.3px;background:#f4f4f4;border:0.9px solid #8c8c8c;border-radius:0.8px"></div>
<svg class="a" style="left:704.2px;top:94.0px;" width="6.3" height="6.3" viewBox="0 0 6.3 6.3"><path d="M1.2 3.2L2.6 4.7L5.3 1.5" fill="none" stroke="#404040" stroke-width="0.8"/></svg>
<div class="t" style="left:712.2px;top:95.01px;font-size:5.6px;transform:scaleX(0.8155);transform-origin:0 0;font-family:'Liberation Mono',monospace;color:#2a2a2a;font-weight:bold">Conductors</div>
<div class="a" style="left:796px;top:102.7px;width:5.9px;height:5.9px;background:#f4f4f4;border:0.9px solid #8c8c8c;border-radius:0.8px"></div>
<div class="a" style="left:808.3px;top:102.7px;width:5.9px;height:5.9px;background:#f4f4f4;border:0.9px solid #8c8c8c;border-radius:0.8px"></div>
<div class="a" style="left:820px;top:102.7px;width:5.9px;height:5.9px;background:#f4f4f4;border:0.9px solid #8c8c8c;border-radius:0.8px"></div>
<div class="a" style="left:831px;top:102.7px;width:5.9px;height:5.9px;background:#f4f4f4;border:0.9px solid #8c8c8c;border-radius:0.8px"></div>
<div class="a" style="left:841.6px;top:102.7px;width:5.9px;height:5.9px;background:#f4f4f4;border:0.9px solid #8c8c8c;border-radius:0.8px"></div>
<div class="a" style="left:852.8px;top:102.7px;width:5.9px;height:5.9px;background:#f4f4f4;border:0.9px solid #8c8c8c;border-radius:0.8px"></div>
<div class="a" style="left:704.2px;top:103.10000000000001px;width:6.3px;height:6.3px;background:#f4f4f4;border:0.9px solid #8c8c8c;border-radius:0.8px"></div>
<svg class="a" style="left:704.2px;top:103.10000000000001px;" width="6.3" height="6.3" viewBox="0 0 6.3 6.3"><path d="M1.2 3.2L2.6 4.7L5.3 1.5" fill="none" stroke="#404040" stroke-width="0.8"/></svg>
<div class="t" style="left:712.2px;top:104.11px;font-size:5.6px;transform:scaleX(0.8155);transform-origin:0 0;font-family:'Liberation Mono',monospace;color:#2a2a2a;font-weight:bold">Planes</div>
<div class="a" style="left:796px;top:111.8px;width:5.9px;height:5.9px;background:#f4f4f4;border:0.9px solid #8c8c8c;border-radius:0.8px"></div>
<div class="a" style="left:808.3px;top:111.8px;width:5.9px;height:5.9px;background:#f4f4f4;border:0.9px solid #8c8c8c;border-radius:0.8px"></div>
<div class="a" style="left:820px;top:111.8px;width:5.9px;height:5.9px;background:#f4f4f4;border:0.9px solid #8c8c8c;border-radius:0.8px"></div>
<div class="a" style="left:831px;top:111.8px;width:5.9px;height:5.9px;background:#f4f4f4;border:0.9px solid #8c8c8c;border-radius:0.8px"></div>
<div class="a" style="left:841.6px;top:111.8px;width:5.9px;height:5.9px;background:#f4f4f4;border:0.9px solid #8c8c8c;border-radius:0.8px"></div>
<div class="a" style="left:852.8px;top:111.8px;width:5.9px;height:5.9px;background:#f4f4f4;border:0.9px solid #8c8c8c;border-radius:0.8px"></div>
<div class="a" style="left:704.2px;top:112.2px;width:6.3px;height:6.3px;background:#f4f4f4;border:0.9px solid #8c8c8c;border-radius:0.8px"></div>
<svg class="a" style="left:704.2px;top:112.2px;" width="6.3" height="6.3" viewBox="0 0 6.3 6.3"><path d="M1.2 3.2L2.6 4.7L5.3 1.5" fill="none" stroke="#404040" stroke-width="0.8"/></svg>
<div class="t" style="left:712.2px;top:113.21px;font-size:5.6px;transform:scaleX(0.8155);transform-origin:0 0;font-family:'Liberation Mono',monospace;color:#2a2a2a;font-weight:bold">Masks</div>
<div class="a" style="left:796px;top:120.5px;width:5.9px;height:5.9px;background:#f4f4f4;border:0.9px solid #8c8c8c;border-radius:0.8px"></div>
<div class="a" style="left:808.3px;top:120.5px;width:5.9px;height:5.9px;background:#f4f4f4;border:0.9px solid #8c8c8c;border-radius:0.8px"></div>
<div class="a" style="left:820px;top:120.5px;width:5.9px;height:5.9px;background:#f4f4f4;border:0.9px solid #8c8c8c;border-radius:0.8px"></div>
<div class="a" style="left:831px;top:120.5px;width:5.9px;height:5.9px;background:#f4f4f4;border:0.9px solid #8c8c8c;border-radius:0.8px"></div>
<div class="a" style="left:841.6px;top:120.5px;width:5.9px;height:5.9px;background:#f4f4f4;border:0.9px solid #8c8c8c;border-radius:0.8px"></div>
<div class="a" style="left:852.8px;top:120.5px;width:5.9px;height:5.9px;background:#f4f4f4;border:0.9px solid #8c8c8c;border-radius:0.8px"></div>
<div class="t" style="left:704.4px;top:121.91px;font-size:5.6px;transform:scaleX(0.8155);transform-origin:0 0;font-family:'Liberation Mono',monospace;color:#2a2a2a;font-weight:bold">All&nbsp;Layers</div>
<div class="a" style="left:704.8px;top:128px;width:155.4px;height:1.1px;background:#6a6a6a"></div>
<div class="a" style="left:703.8px;top:139.5px;width:156px;height:8.7px;background:#dedede"></div>
<div class="a" style="left:703.8px;top:157.4px;width:156px;height:8.7px;background:#dedede"></div>
<div class="t" style="left:704.5px;top:132.91px;font-size:5.6px;transform:scaleX(0.8155);transform-origin:0 0;font-family:'Liberation Mono',monospace;color:#2a2a2a;font-weight:bold">Top</div>
<div class="a" style="left:796px;top:131.29999999999998px;width:6.8px;height:6.8px;background:#000;border:0.9px solid #d4d4d4"></div>
<div class="a" style="left:808.6px;top:131.29999999999998px;width:6.8px;height:6.8px;background:#000;border:0.9px solid #d4d4d4"></div>
<div class="a" style="left:820.2px;top:131.29999999999998px;width:6.8px;height:6.8px;background:#000;border:0.9px solid #d4d4d4"></div>
<div class="a" style="left:831.2px;top:131.29999999999998px;width:6.8px;height:6.8px;background:#000;border:0.9px solid #d4d4d4"></div>
<div class="a" style="left:841.8px;top:131.29999999999998px;width:6.8px;height:6.8px;background:#000;border:0.9px solid #d4d4d4"></div>
<div class="a" style="left:852.4px;top:131.6px;width:6.2px;height:6.2px;background:#fff;border:0.9px solid #9a9a9a"></div>
<div class="t" style="left:704.5px;top:141.91px;font-size:5.6px;transform:scaleX(0.8155);transform-origin:0 0;font-family:'Liberation Mono',monospace;color:#2a2a2a;font-weight:bold">Gnd02</div>
<div class="a" style="left:796px;top:140.29999999999998px;width:6.8px;height:6.8px;background:#000;border:0.9px solid #d4d4d4"></div>
<div class="a" style="left:808.6px;top:140.29999999999998px;width:6.8px;height:6.8px;background:#5f9a3c;border:0.9px solid #d4d4d4"></div>
<div class="a" style="left:820.2px;top:140.29999999999998px;width:6.8px;height:6.8px;background:#5f9a3c;border:0.9px solid #d4d4d4"></div>
<div class="a" style="left:831.2px;top:140.29999999999998px;width:6.8px;height:6.8px;background:#5f9a3c;border:0.9px solid #d4d4d4"></div>
<div class="a" style="left:841.8px;top:140.29999999999998px;width:6.8px;height:6.8px;background:#000;border:0.9px solid #d4d4d4"></div>
<div class="a" style="left:852.4px;top:140.6px;width:6.2px;height:6.2px;background:#fff;border:0.9px solid #9a9a9a"></div>
<div class="t" style="left:704.5px;top:151.01px;font-size:5.6px;transform:scaleX(0.8155);transform-origin:0 0;font-family:'Liberation Mono',monospace;color:#2a2a2a;font-weight:bold">Pow03</div>
<div class="a" style="left:796px;top:149.4px;width:6.8px;height:6.8px;background:#000;border:0.9px solid #d4d4d4"></div>
<div class="a" style="left:808.6px;top:149.4px;width:6.8px;height:6.8px;background:#000;border:0.9px solid #d4d4d4"></div>
<div class="a" style="left:820.2px;top:149.4px;width:6.8px;height:6.8px;background:#000;border:0.9px solid #d4d4d4"></div>
<div class="a" style="left:831.2px;top:149.4px;width:6.8px;height:6.8px;background:#000;border:0.9px solid #d4d4d4"></div>
<div class="a" style="left:841.8px;top:149.4px;width:6.8px;height:6.8px;background:#000;border:0.9px solid #d4d4d4"></div>
<div class="a" style="left:852.4px;top:149.70000000000002px;width:6.2px;height:6.2px;background:#fff;border:0.9px solid #9a9a9a"></div>
<div class="t" style="left:704.5px;top:160.11px;font-size:5.6px;transform:scaleX(0.8155);transform-origin:0 0;font-family:'Liberation Mono',monospace;color:#2a2a2a;font-weight:bold">Bottom</div>
<div class="a" style="left:796px;top:158.5px;width:6.8px;height:6.8px;background:#000;border:0.9px solid #d4d4d4"></div>
<div class="a" style="left:808.6px;top:158.5px;width:6.8px;height:6.8px;background:#000;border:0.9px solid #d4d4d4"></div>
<div class="a" style="left:820.2px;top:158.5px;width:6.8px;height:6.8px;background:#000;border:0.9px solid #d4d4d4"></div>
<div class="a" style="left:831.2px;top:158.5px;width:6.8px;height:6.8px;background:#000;border:0.9px solid #d4d4d4"></div>
<div class="a" style="left:841.8px;top:158.5px;width:6.8px;height:6.8px;background:#000;border:0.9px solid #d4d4d4"></div>
<div class="a" style="left:852.4px;top:158.8px;width:6.2px;height:6.2px;background:#fff;border:0.9px solid #9a9a9a"></div>
<div class="t" style="left:704.5px;top:169.21px;font-size:5.6px;transform:scaleX(0.8155);transform-origin:0 0;font-family:'Liberation Mono',monospace;color:#2a2a2a;font-weight:bold">Through&nbsp;All</div>
<div class="a" style="left:796px;top:167.6px;width:6.8px;height:6.8px;background:#000;border:0.9px solid #d4d4d4"></div>
<div class="a" style="left:841.8px;top:167.6px;width:6.8px;height:6.8px;background:#000;border:0.9px solid #d4d4d4"></div>
<div class="a" style="left:852.4px;top:167.9px;width:6.2px;height:6.2px;background:#fff;border:0.9px solid #9a9a9a"></div>
<div class="a" style="left:744.3px;top:239.7px;width:6.2px;height:5.9px;background:#f8f8f8;border:0.9px solid #8a8a8a;border-radius:0.8px"></div>
<div class="t" style="left:753px;top:240.91px;font-size:5.6px;transform:scaleX(0.8036);transform-origin:0 0;font-family:'Liberation Mono',monospace;color:#2a2a2a;font-weight:bold">Enable&nbsp;layer&nbsp;select&nbsp;mode</div>
<div class="t" style="left:706.7px;top:254.51px;font-size:5.6px;transform:scaleX(0.8185);transform-origin:0 0;font-family:'Liberation Mono',monospace;color:#1a1a1a;font-weight:bold">Options</div>
<div class="a" style="left:726.5px;top:255.4px;width:108.5px;height:1.6px;background:#a4a4a4;border-top:0.5px solid #c4c4c4"></div>
<div class="a" style="left:841.2px;top:257.1px;width:3.2px;height:1px;background:#202020"></div>
<svg class="a" style="left:848.7px;top:253.9px;" width="5" height="4.5" viewBox="0 0 5 4.5"><rect x="0.5" y="1.5" width="3" height="2.6" fill="none" stroke="#202020" stroke-width="0.9"/><path d="M1.5 1.3V0.5H4.5V3H4" fill="none" stroke="#202020" stroke-width="0.8"/></svg>
<svg class="a" style="left:856.2px;top:254.1px;" width="4.5" height="4" viewBox="0 0 4.5 4"><path d="M0.5 0.5L4 3.5M4 0.5L0.5 3.5" stroke="#202020" stroke-width="0.9"/></svg>
<div class="t" style="left:704px;top:277.77px;font-size:5.7px;transform:scaleX(0.8422);transform-origin:0 0;color:#222">Active Class and Subclass:</div>
<div class="a" style="left:716.6px;top:291.3px;width:67.9px;height:9.3px;background:#e5e5e5;border:1px solid #d2d2d2"></div>
<div class="t" style="left:718.7px;top:293.17px;font-size:5.7px;transform:scaleX(0.8329);transform-origin:0 0;color:#222">Etch</div>
<svg class="a" style="left:777.8px;top:294.3px;" width="5" height="3" viewBox="0 0 5 3"><path d="M0.4 0.5L2.5 2.5L4.6 0.5" fill="none" stroke="#505050" stroke-width="0.7"/></svg>
<div class="a" style="left:707.8px;top:309px;width:5.2px;height:5.7px;background:#4e8a34;border:0.9px solid #707070"></div>
<div class="a" style="left:716.6px;top:307.4px;width:67.9px;height:8.8px;background:#fff;border:1px solid #a8a8a8"></div>
<div class="a" style="left:719px;top:309.8px;width:2.9px;height:4px;background:#205a10;border:0.5px solid #666"></div>
<div class="t" style="left:724px;top:309.27px;font-size:5.7px;transform:scaleX(0.8589);transform-origin:0 0;color:#222">Gnd02</div>
<svg class="a" style="left:777.8px;top:310.3px;" width="5" height="3" viewBox="0 0 5 3"><path d="M0.4 0.5L2.5 2.5L4.6 0.5" fill="none" stroke="#505050" stroke-width="0.7"/></svg>
<div class="t" style="left:6.9px;top:372.51px;font-size:5.6px;transform:scaleX(0.8065);transform-origin:0 0;font-family:'Liberation Mono',monospace;color:#1a1a1a;font-weight:bold">Command</div>
<div class="a" style="left:27px;top:373.7px;width:438.5px;height:1.6px;background:#a4a4a4;border-top:0.5px solid #c4c4c4"></div>
<div class="a" style="left:471px;top:375.3px;width:3.4px;height:1px;background:#202020"></div>
<svg class="a" style="left:478.5px;top:371.9px;" width="5" height="4.5" viewBox="0 0 5 4.5"><rect x="0.5" y="1.5" width="3" height="2.6" fill="none" stroke="#202020" stroke-width="0.9"/><path d="M1.5 1.3V0.5H4.5V3H4" fill="none" stroke="#202020" stroke-width="0.8"/></svg>
<svg class="a" style="left:487px;top:372.1px;" width="4.5" height="4" viewBox="0 0 4.5 4"><path d="M0.5 0.5L4 3.5M4 0.5L0.5 3.5" stroke="#202020" stroke-width="0.9"/></svg>
<div class="a" style="left:4.2px;top:382.4px;width:487.2px;height:58px;background:#fff;border:1px solid #a0a0a0;border-right:1px solid #dcdcdc;overflow:hidden">
<div class="t mono" style="left:1.2999999999999998px;top:-2.34px;font-size:5.4px;transform:scaleX(0.8302);transform-origin:0 0;color:#222;font-weight:bold">*Error*&nbsp;load:&nbsp;can't&nbsp;access&nbsp;file&nbsp;-&nbsp;&quot;allegro_init_site.il&quot;</div>
<div class="t mono" style="left:1.2999999999999998px;top:3.93px;font-size:5.4px;transform:scaleX(0.8302);transform-origin:0 0;color:#222;font-weight:bold">*Error*&nbsp;load:&nbsp;can't&nbsp;access&nbsp;file&nbsp;-&nbsp;&quot;F:/Cadence/OrCAD_library_Builder/LibraryBuilder/setup/skill/builder.ile&quot;</div>
<div class="t mono" style="left:1.2999999999999998px;top:10.20px;font-size:5.4px;transform:scaleX(0.8302);transform-origin:0 0;color:#222;font-weight:bold">*Error*&nbsp;load:&nbsp;can't&nbsp;access&nbsp;file&nbsp;-&nbsp;&quot;Bicycle_lic.il&quot;</div>
<div class="t mono" style="left:1.2999999999999998px;top:16.47px;font-size:5.4px;transform:scaleX(0.8302);transform-origin:0 0;color:#222;font-weight:bold">*Error*&nbsp;load:&nbsp;can't&nbsp;access&nbsp;file&nbsp;-&nbsp;&quot;report_pin_count.il&quot;</div>
<div class="t mono" style="left:1.2999999999999998px;top:22.74px;font-size:5.4px;transform:scaleX(0.8302);transform-origin:0 0;color:#222;font-weight:bold">*Error*&nbsp;load:&nbsp;can't&nbsp;access&nbsp;file&nbsp;-&nbsp;&quot;game_tcs.il&quot;</div>
<div class="t mono" style="left:1.2999999999999998px;top:29.01px;font-size:5.4px;transform:scaleX(0.8302);transform-origin:0 0;color:#222;font-weight:bold">*Error*&nbsp;load:&nbsp;can't&nbsp;access&nbsp;file&nbsp;-&nbsp;&quot;TP_Cmp.il&quot;</div>
<div class="t mono" style="left:1.2999999999999998px;top:35.28px;font-size:5.4px;transform:scaleX(0.8302);transform-origin:0 0;color:#222;font-weight:bold">*Error*&nbsp;load:&nbsp;can't&nbsp;access&nbsp;file&nbsp;-&nbsp;&quot;c_ohio_products.il&quot;</div>
<div class="t mono" style="left:42.5px;top:47.06px;font-size:5.4px;transform:scaleX(0.8025);transform-origin:0 0;color:#222;font-weight:bold">})</div>
<div class="a" style="left:479.5px;top:0px;width:7px;height:56px;background:#f0f0f0"></div>
<div class="a" style="left:480.3px;top:19.4px;width:6px;height:19.8px;background:#cdcdcd"></div>
<div class="a" style="left:481.8px;top:25.6px;width:3px;height:3.3px;background:#f4f4f4"></div>
<svg class="a" style="left:480.8px;top:2.8px;" width="5" height="3.5" viewBox="0 0 5 3.5"><path d="M0.6 2.8L2.5 0.9L4.4 2.8" fill="none" stroke="#606060" stroke-width="0.8"/></svg>
<svg class="a" style="left:480.8px;top:52.2px;" width="5" height="3.5" viewBox="0 0 5 3.5"><path d="M0.6 0.7L2.5 2.6L4.4 0.7" fill="none" stroke="#606060" stroke-width="0.8"/></svg>
</div>
<div class="a" style="left:4.2px;top:443.5px;width:487.3px;height:9px;background:#fff;border:1px solid #b0b0b0"></div>
<div class="a" style="left:32.3px;top:444.3px;width:0.8px;height:7.4px;background:#7a7a7a"></div>
<div class="t mono" style="left:5.2px;top:447.06px;font-size:5.4px;transform:scaleX(0.8395);transform-origin:0 0;color:#333;font-weight:bold">Command&nbsp;></div>
<svg class="a" style="left:485.3px;top:446.8px;" width="5" height="3" viewBox="0 0 5 3"><path d="M0.4 0.5L2.5 2.5L4.6 0.5" fill="none" stroke="#606060" stroke-width="0.7"/></svg>
<div class="t" style="left:504.4px;top:372.51px;font-size:5.6px;transform:scaleX(0.8185);transform-origin:0 0;font-family:'Liberation Mono',monospace;color:#1a1a1a;font-weight:bold">View</div>
<div class="a" style="left:516px;top:373.7px;width:152px;height:1.6px;background:#a4a4a4;border-top:0.5px solid #c4c4c4"></div>
<div class="a" style="left:674.6px;top:375.3px;width:3.4px;height:1px;background:#202020"></div>
<svg class="a" style="left:681.5px;top:371.9px;" width="5" height="4.5" viewBox="0 0 5 4.5"><rect x="0.5" y="1.5" width="3" height="2.6" fill="none" stroke="#202020" stroke-width="0.9"/><path d="M1.5 1.3V0.5H4.5V3H4" fill="none" stroke="#202020" stroke-width="0.8"/></svg>
<svg class="a" style="left:690px;top:372.1px;" width="4.5" height="4" viewBox="0 0 4.5 4"><path d="M0.5 0.5L4 3.5M4 0.5L0.5 3.5" stroke="#202020" stroke-width="0.9"/></svg>
<div class="a" style="left:498.8px;top:379.6px;width:198.8px;height:75px;background:#c8c8c8"></div>
<div class="a" style="left:499.6px;top:380.4px;width:197.3px;height:73.5px;background:#000"></div>
<div class="a" style="left:566px;top:381.5px;width:65px;height:70.5px;border:0.7px solid #a0a0a0;border-radius:3px"></div>
<div class="a" style="left:0px;top:453.6px;width:865px;height:15.4px;background:#f0f0f0"></div>
<div class="t mono" style="left:1.2px;top:461.46px;font-size:5.4px;transform:scaleX(0.8025);transform-origin:0 0;color:#222;font-weight:bold">Idle</div>
<div class="a" style="left:75.8px;top:457.6px;width:73px;height:10.4px;background:#00ff00"></div>
<div class="a" style="left:223.7px;top:455.5px;width:0.8px;height:13px;background:#dcdcdc"></div>
<div class="t mono" style="left:225.8px;top:461.46px;font-size:5.4px;transform:scaleX(0.8210);transform-origin:0 0;color:#333;font-weight:bold">Gnd02</div>
<div class="a" style="left:299.5px;top:455.5px;width:0.8px;height:13px;background:#dcdcdc"></div>
<div class="t" style="left:301.5px;top:460.03px;font-size:5.4px;transform:scaleX(0.954);transform-origin:0 0;color:#222">15015.000,&nbsp; 10280.000</div>
<div class="a" style="left:376.4px;top:456.8px;width:10.100000000000023px;height:10px;background:#e4e4e4;border:0.8px solid #b4b4b4"></div>
<div class="t mono" style="left:377.4px;top:460.76px;font-size:5.4px;transform:scaleX(0.8333);transform-origin:0 0;color:#222;font-weight:bold">il:</div>
<div class="a" style="left:390.8px;top:456.8px;width:9.399999999999977px;height:10px;background:#e4e4e4;border:0.8px solid #b4b4b4"></div>
<div class="t mono" style="left:394.15px;top:460.76px;font-size:5.4px;transform:scaleX(0.8333);transform-origin:0 0;color:#222;font-weight:bold">P</div>
<div class="a" style="left:403.7px;top:456.8px;width:9.400000000000034px;height:10px;background:#e4e4e4;border:0.8px solid #b4b4b4"></div>
<div class="t mono" style="left:407.04999999999995px;top:460.76px;font-size:5.4px;transform:scaleX(0.8333);transform-origin:0 0;color:#222;font-weight:bold">A</div>
<div class="a" style="left:489.3px;top:455.5px;width:0.8px;height:13px;background:#dcdcdc"></div>
<div class="a" style="left:563px;top:455.5px;width:0.8px;height:13px;background:#dcdcdc"></div>
<div class="t mono" style="left:566.2px;top:461.46px;font-size:5.4px;transform:scaleX(0.8333);transform-origin:0 0;color:#222;font-weight:bold">None</div>
<div class="a" style="left:639.6px;top:455.5px;width:0.8px;height:13px;background:#dcdcdc"></div>
<div class="t mono" style="left:642px;top:461.46px;font-size:5.4px;transform:scaleX(0.8333);transform-origin:0 0;color:#555;font-weight:normal">N/A</div>
<div class="a" style="left:716.6px;top:457.5px;width:73.2px;height:11.5px;background:#ffff00"></div>
<div class="t mono" style="left:718px;top:461.46px;font-size:5.4px;transform:scaleX(0.8025);transform-origin:0 0;color:#222;font-weight:bold">DRC</div>
<div class="t mono" style="left:792px;top:461.46px;font-size:5.4px;transform:scaleX(0.8333);transform-origin:0 0;color:#222;font-weight:bold">0</div>
<div class="a" style="left:786.3px;top:436.3px;width:68.1px;height:11.7px;background:#fff;border:0.8px solid #dfe6f0"></div>
<svg class="a" style="left:774.5px;top:435px;" width="13.5" height="13.5" viewBox="0 0 13.5 13.5"><g transform="rotate(-12 6.7 6.7)"><rect x="1" y="1" width="11.5" height="11.5" rx="2.5" fill="#f15a24"/><text x="6.7" y="10.6" text-anchor="middle" font-size="10.5" font-weight="bold" font-family="Liberation Sans" fill="#fff">S</text></g></svg>
<svg class="a" style="left:786.3px;top:436.3px;" width="68" height="12" viewBox="0 0 68 12"><text x="3" y="9" font-size="8" fill="#1a6fd8">中</text>
<path d="M16.5 5.2V5.8M17 8.5Q17.5 9.5 16.8 10.2" stroke="#1a6fd8" stroke-width="1.3" fill="none"/>
<circle cx="29" cy="4.5" r="1.4" fill="#1a6fd8"/><path d="M27.2 10V7Q29 5.5 30.8 7V10" fill="#1a6fd8"/>
<rect x="37.5" y="4" width="7" height="5.5" fill="none" stroke="#1a6fd8" stroke-width="1.1"/><path d="M39 6.5H43" stroke="#1a6fd8" stroke-width="0.8"/>
<path d="M48.5 4H55.5M49 6.5H55M50 9.5L51.5 7M54 9.5L52.5 7" stroke="#1a6fd8" stroke-width="1.3"/>
<rect x="59.5" y="3.5" width="2.8" height="2.8" fill="#1a6fd8"/><rect x="63.5" y="3.5" width="2.8" height="2.8" fill="#1a6fd8"/><rect x="59.5" y="7.5" width="2.8" height="2.8" fill="#1a6fd8"/><rect x="63.5" y="7.5" width="2.8" height="2.8" fill="#1a6fd8"/></svg>
<div class="t" style="left:713.3px;top:443px;font-size:15.4px;line-height:1;color:rgba(240,240,240,0.9);-webkit-text-stroke:0.6px rgba(70,70,70,0.8);letter-spacing:0.1px">CSDN @<span style="letter-spacing:1.6px">刘小同学</span></div></body></html>
